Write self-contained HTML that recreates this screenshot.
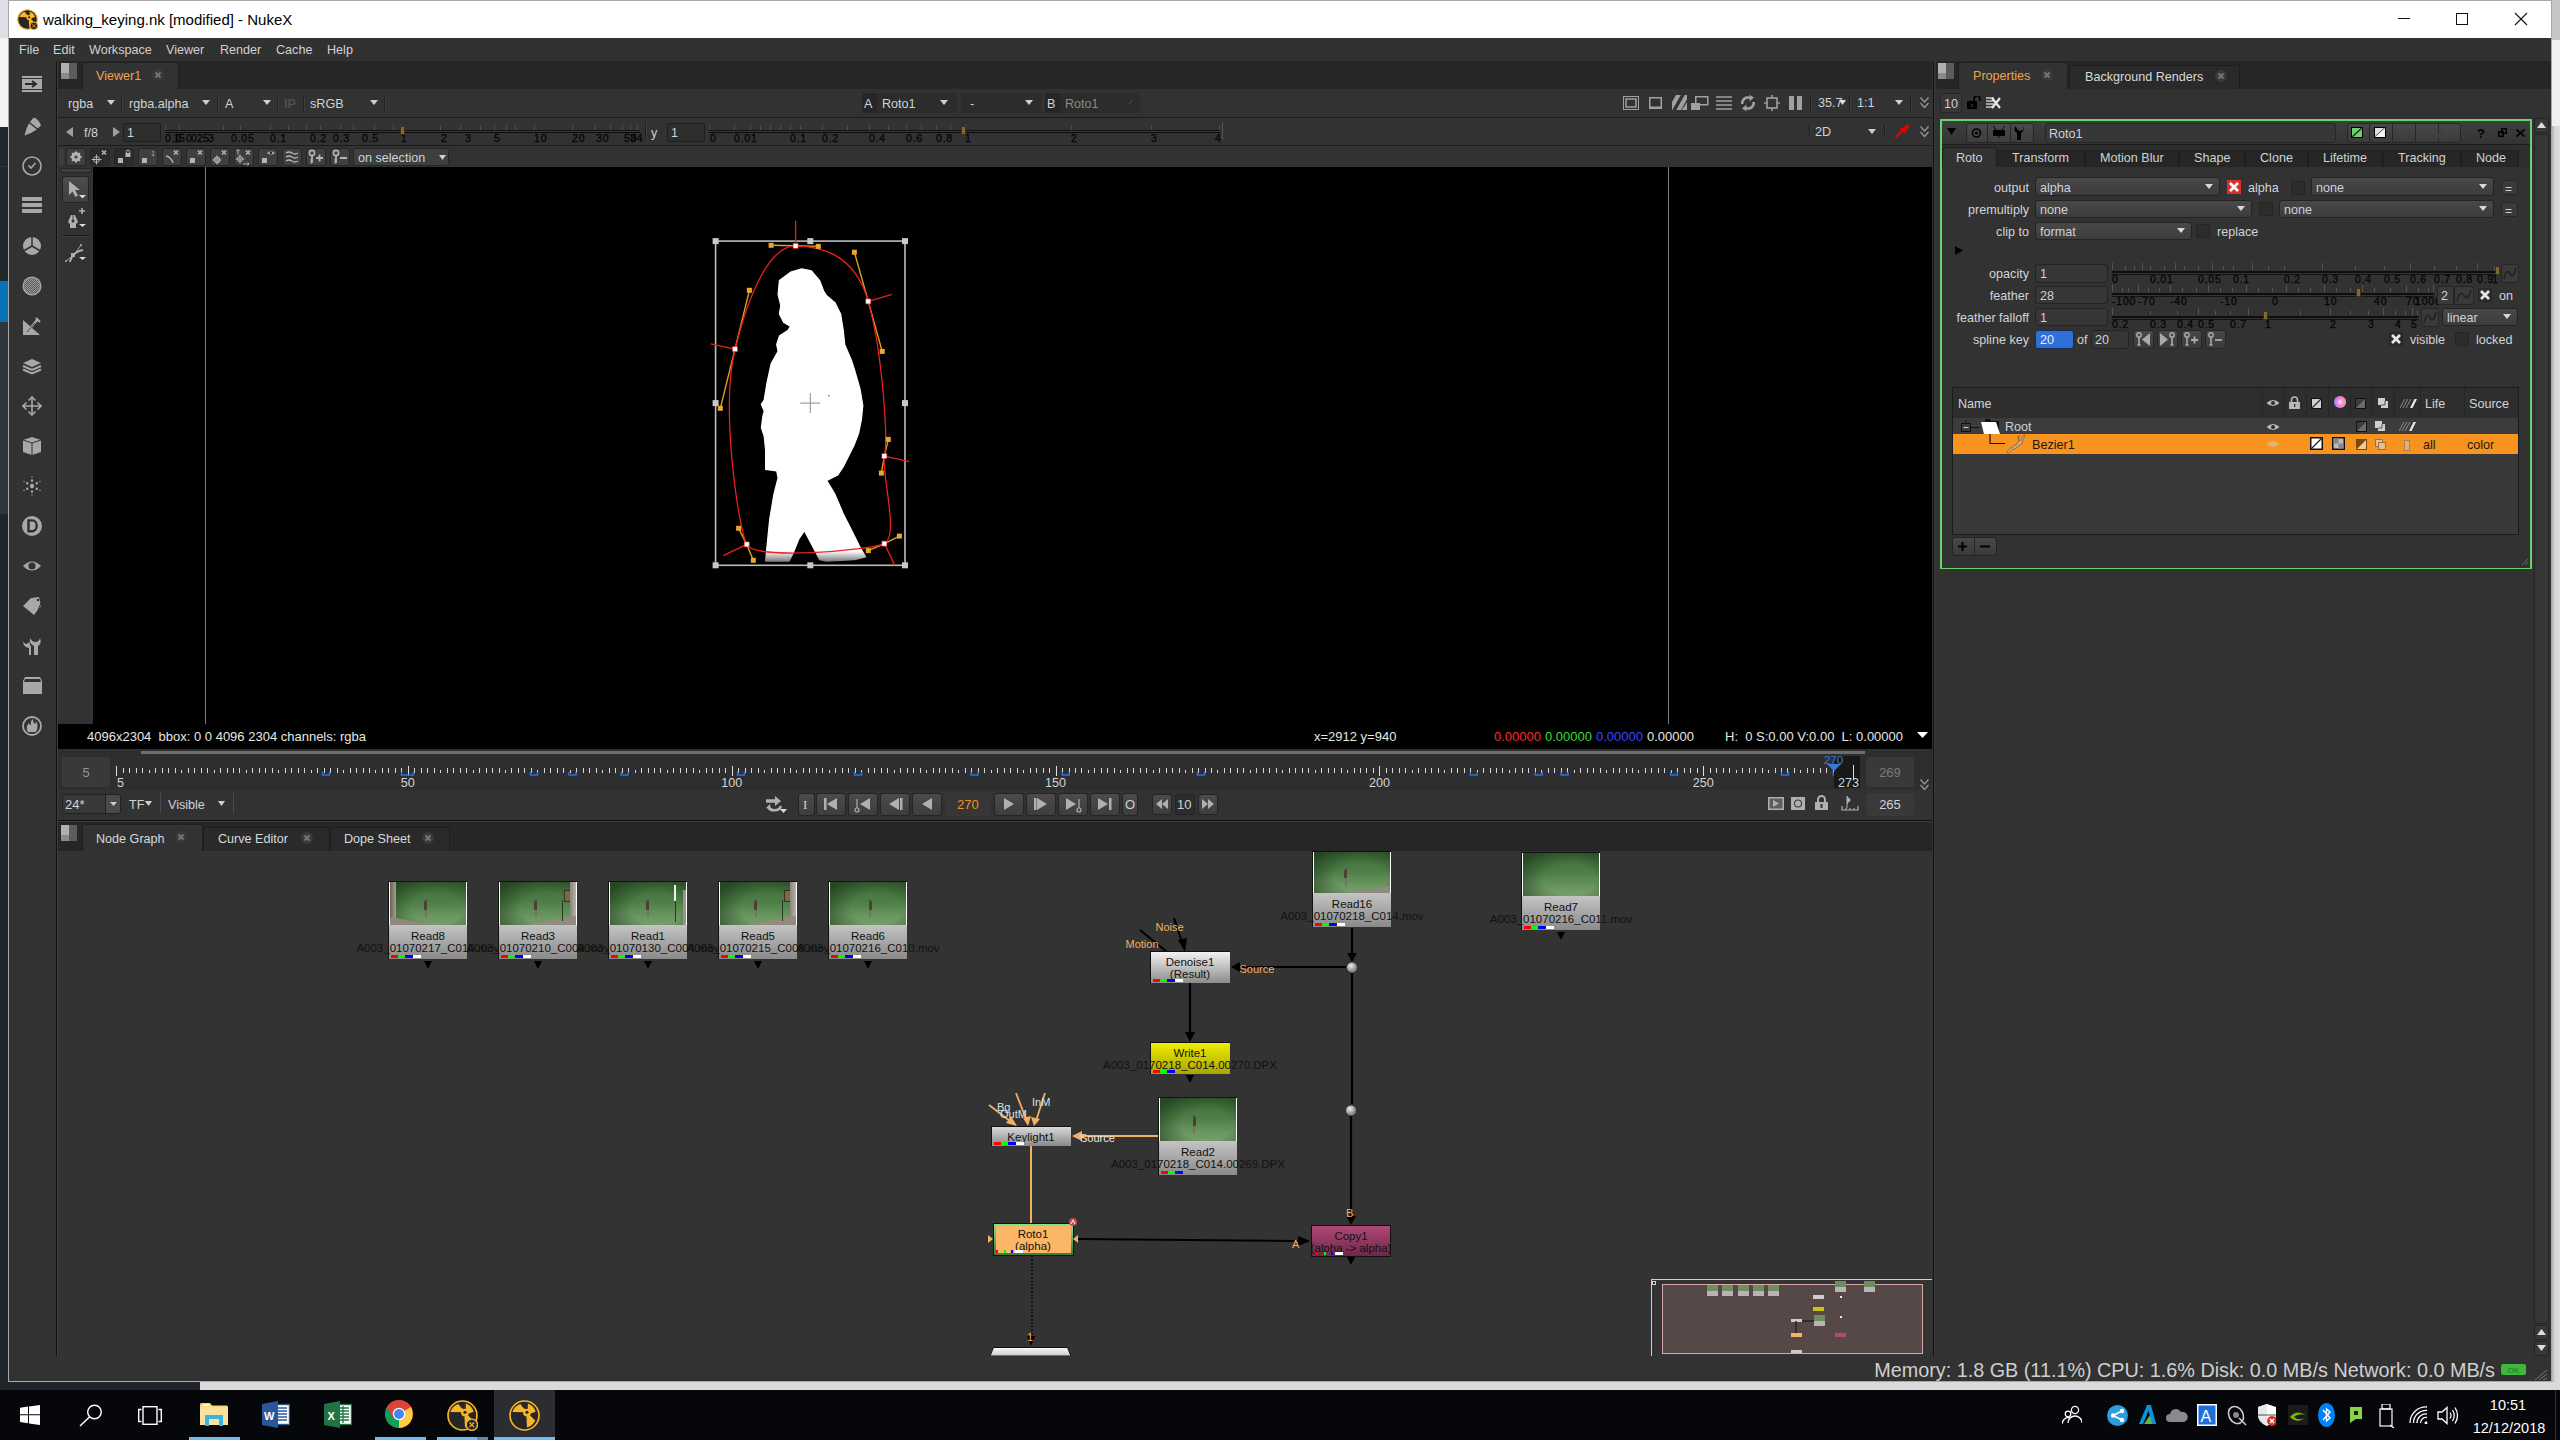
<!DOCTYPE html>
<html><head><meta charset="utf-8">
<style>
*{box-sizing:border-box;margin:0;padding:0}
html,body{width:2560px;height:1440px;overflow:hidden;background:#1d2127;font-family:"Liberation Sans",sans-serif;position:relative}
.a{position:absolute}
.t{position:absolute;white-space:nowrap;line-height:1;}
</style></head><body>
<div class="a" style="left:0px;top:0px;width:9px;height:38px;background:#dde1e6"></div>
<div class="a" style="left:0px;top:38px;width:9px;height:89px;background:#f3f3f3"></div>
<div class="a" style="left:0px;top:127px;width:9px;height:154px;background:#22272c"></div>
<div class="a" style="left:0px;top:166px;width:9px;height:1px;background:#30353a"></div>
<div class="a" style="left:0px;top:281px;width:9px;height:41px;background:#0a72b8"></div>
<div class="a" style="left:0px;top:322px;width:9px;height:192px;background:#30363c"></div>
<div class="a" style="left:0px;top:514px;width:9px;height:876px;background:#1f252a"></div>
<div class="a" style="left:2551px;top:0px;width:9px;height:40px;background:#c6c6c6"></div>
<div class="a" style="left:2551px;top:40px;width:9px;height:86px;background:#f0f0f0"></div>
<div class="a" style="left:2551px;top:126px;width:9px;height:1264px;background:linear-gradient(90deg,#a0a0a0,#d4d4d4 40%,#e0e0e0)"></div>
<div class="a" style="left:0px;top:1382px;width:200px;height:8px;background:#1f252a"></div>
<div class="a" style="left:200px;top:1382px;width:2360px;height:8px;background:#dadada"></div>
<div class="a" style="left:8px;top:0px;width:2544px;height:1382px;background:#323232;border:1px solid #a8a8a8"></div>
<div class="a" style="left:9px;top:1px;width:2542px;height:37px;background:#fff"></div>
<svg class="a" style="left:17px;top:9px;" width="21" height="21" viewBox="0 0 21 21"><g transform="scale(0.7)"><circle cx="15" cy="15" r="14" fill="#262626" stroke="#f7b52a" stroke-width="1.6"/><path d="M17.4 11.8L3.2 11.6A12.6 12.6 0 0 1 11 3.9Q13 7.5 15.2 8.4Z" fill="#f7b52a"/><path d="M17.4 11.8L18.2 8.4V3.5A12.6 12.6 0 0 1 25.8 11.3L21.7 12.8Z" fill="#f7b52a"/><path d="M19.5 14L25.4 19.9A12.6 12.6 0 0 1 17.4 26.6L16.9 16Z" fill="#f7b52a"/><circle cx="17.4" cy="12.2" r="3.8" fill="#f7b52a"/><circle cx="17.4" cy="11.9" r="1.5" fill="#262626"/><circle cx="24" cy="24" r="5.5" fill="#262626" stroke="#f7b52a" stroke-width="1.4"/><path d="M21.8 21.8L26.2 26.2M26.2 21.8L21.8 26.2" stroke="#f7b52a" stroke-width="1.2"/></g></svg>
<div class="t" style="left:43px;top:12.0px;font-size:15px;color:#000;">walking_keying.nk [modified] - NukeX</div>
<div class="a" style="left:2398px;top:18px;width:12px;height:1px;background:#111"></div>
<div class="a" style="left:2456px;top:13px;width:12px;height:12px;border:1px solid #111"></div>
<svg class="a" style="left:2514px;top:12px;" width="14" height="14" viewBox="0 0 14 14"><path d="M1 1L13 13M13 1L1 13" stroke="#111" stroke-width="1.1"/></svg>
<div class="a" style="left:9px;top:38px;width:2542px;height:23px;background:#313131"></div>
<div class="t" style="left:19px;top:44.0px;font-size:12.6px;color:#d0d0d0;">File</div>
<div class="t" style="left:53px;top:44.0px;font-size:12.6px;color:#d0d0d0;">Edit</div>
<div class="t" style="left:89px;top:44.0px;font-size:12.6px;color:#d0d0d0;">Workspace</div>
<div class="t" style="left:166px;top:44.0px;font-size:12.6px;color:#d0d0d0;">Viewer</div>
<div class="t" style="left:220px;top:44.0px;font-size:12.6px;color:#d0d0d0;">Render</div>
<div class="t" style="left:276px;top:44.0px;font-size:12.6px;color:#d0d0d0;">Cache</div>
<div class="t" style="left:327px;top:44.0px;font-size:12.6px;color:#d0d0d0;">Help</div>
<div class="a" style="left:9px;top:61px;width:47px;height:1295px;background:#323232"></div>
<div class="a" style="left:56px;top:61px;width:1px;height:1295px;background:#111"></div>
<div class="a" style="left:57px;top:61px;width:1px;height:1295px;background:#3e3e3e"></div>
<svg class="a" style="left:0px;top:0px;" width="0" height="0" viewBox="0 0 0 0"><defs><pattern id="dots" width="2" height="2" patternUnits="userSpaceOnUse"><rect width="1" height="1" fill="#9a9a9a"/><rect x="1" y="1" width="1" height="1" fill="#9a9a9a"/></pattern></defs></svg>
<svg class="a" style="left:22px;top:76px;" width="20" height="20" viewBox="0 0 20 20"><rect x="0" y="0" width="20" height="2" fill="#a8a8a8"/><rect x="0" y="3" width="20" height="10" fill="#a8a8a8"/><rect x="0" y="14" width="20" height="2" fill="#a8a8a8"/><path d="M3 8H14M10 5L14 8L10 11" stroke="#2a2a2a" stroke-width="2" fill="none"/></svg>
<svg class="a" style="left:22px;top:116px;" width="20" height="20" viewBox="0 0 20 20"><path d="M2.5 19.5L4.5 12.5Q7.5 5.5 12 1.5Q17 3.5 19 9.5Q14 14.5 9 17Z" fill="#a8a8a8"/><path d="M7 6.2L16.5 14" stroke="#323232" stroke-width="1.4"/></svg>
<svg class="a" style="left:22px;top:156px;" width="20" height="20" viewBox="0 0 20 20"><circle cx="10" cy="10" r="9" stroke="#a8a8a8" stroke-width="1.6" fill="none"/><path d="M6.5 9.5L9 12L13.5 7" stroke="#a8a8a8" stroke-width="1.6" fill="none"/></svg>
<svg class="a" style="left:22px;top:196px;" width="20" height="20" viewBox="0 0 20 20"><rect x="0" y="1" width="20" height="4" rx="1" fill="#a8a8a8"/><rect x="0" y="7" width="20" height="4" rx="1" fill="#a8a8a8"/><rect x="0" y="13" width="20" height="4" rx="1" fill="#a8a8a8"/></svg>
<svg class="a" style="left:22px;top:236px;" width="20" height="20" viewBox="0 0 20 20"><circle cx="10" cy="10" r="9" fill="#a8a8a8"/><path d="M10 10V0M10 10L1.5 15M10 10L18.5 15" stroke="#323232" stroke-width="1.5"/></svg>
<svg class="a" style="left:22px;top:276px;" width="20" height="20" viewBox="0 0 20 20"><circle cx="10" cy="10" r="9.5" fill="#a8a8a8"/><circle cx="10" cy="10" r="8" fill="#5a5a5a"/><circle cx="10" cy="10" r="8" fill="url(#dots)"/></svg>
<svg class="a" style="left:22px;top:316px;" width="20" height="20" viewBox="0 0 20 20"><path d="M1 4L1 19L18 19Z" fill="#a8a8a8"/><path d="M6 15L15 4M14 2L18 6" stroke="#a8a8a8" stroke-width="2.2"/><path d="M5 16L13 7" stroke="#323232" stroke-width="0.8"/></svg>
<svg class="a" style="left:22px;top:356px;" width="20" height="20" viewBox="0 0 20 20"><path d="M10 3L19 7L10 11L1 7Z" fill="#a8a8a8"/><path d="M1 10L10 14L19 10" stroke="#a8a8a8" stroke-width="2" fill="none"/><path d="M1 13.5L10 17.5L19 13.5" stroke="#a8a8a8" stroke-width="2" fill="none"/></svg>
<svg class="a" style="left:22px;top:396px;" width="20" height="20" viewBox="0 0 20 20"><path d="M10 1V19M1 10H19" stroke="#a8a8a8" stroke-width="1.6"/><path d="M6.5 4.5L10 1L13.5 4.5M6.5 15.5L10 19L13.5 15.5M4.5 6.5L1 10L4.5 13.5M15.5 6.5L19 10L15.5 13.5" stroke="#a8a8a8" stroke-width="1.6" fill="none"/></svg>
<svg class="a" style="left:22px;top:436px;" width="20" height="20" viewBox="0 0 20 20"><path d="M10 1L19 4V16L10 19L1 16V4Z" fill="#a8a8a8"/><path d="M1 4L10 7L19 4M10 7V19" stroke="#323232" stroke-width="1" fill="none"/></svg>
<svg class="a" style="left:22px;top:476px;" width="20" height="20" viewBox="0 0 20 20"><circle cx="10" cy="10" r="2.2" fill="#a8a8a8"/><g fill="#a8a8a8"><circle cx="10" cy="4.5" r="1.2"/><circle cx="10" cy="15.5" r="1.2"/><circle cx="5.2" cy="7.2" r="1.2"/><circle cx="14.8" cy="7.2" r="1.2"/><circle cx="5.2" cy="12.8" r="1.2"/><circle cx="14.8" cy="12.8" r="1.2"/><circle cx="10" cy="1" r=".7"/><circle cx="10" cy="19" r=".7"/><circle cx="2" cy="5.5" r=".7"/><circle cx="18" cy="5.5" r=".7"/><circle cx="2" cy="14.5" r=".7"/><circle cx="18" cy="14.5" r=".7"/></g></svg>
<svg class="a" style="left:22px;top:516px;" width="20" height="20" viewBox="0 0 20 20"><circle cx="10" cy="10" r="10" fill="#a8a8a8"/><path d="M5.3 3.2H10.3A5.6 6.6 0 0 1 10.3 16.4H5.3Z" fill="#2e2e2e"/><path d="M7.7 5.6H10.2A3.3 4.2 0 0 1 10.2 14H7.7Z" fill="#a8a8a8"/></svg>
<svg class="a" style="left:22px;top:556px;" width="20" height="20" viewBox="0 0 20 20"><path d="M1 10Q10 1 19 10Q10 19 1 10Z" fill="#a8a8a8"/><circle cx="10" cy="10" r="3.6" fill="#323232"/></svg>
<svg class="a" style="left:22px;top:596px;" width="20" height="20" viewBox="0 0 20 20"><path d="M1 10L9 2L17 1L19 10L12 19Z" fill="#a8a8a8"/><circle cx="16" cy="4" r="1.2" fill="#323232"/><path d="M19 7L14 19" stroke="#323232" stroke-width="1"/></svg>
<svg class="a" style="left:22px;top:636px;" width="20" height="20" viewBox="0 0 20 20"><path d="M7 19V12Q1 11 1 5Q2 8 5 8Q7 7 7 5Q8 9 9 11V19Z" fill="#a8a8a8"/><path d="M12 19V10Q7 8 8 2Q10 6 13.5 6Q17 6 18 2Q20 8 16 10V19Z" fill="#a8a8a8"/></svg>
<svg class="a" style="left:22px;top:676px;" width="20" height="20" viewBox="0 0 20 20"><path d="M3 1H18L20 5V18H1V5Z" fill="#a8a8a8"/><path d="M3 3H18L19 6H2Z" fill="#323232"/></svg>
<svg class="a" style="left:22px;top:716px;" width="20" height="20" viewBox="0 0 20 20"><circle cx="10" cy="10" r="9" stroke="#a8a8a8" stroke-width="1.8" fill="none"/><path d="M6 16Q3 11 7 7Q8 10 9 9Q8 5 11 3Q11 7 13 8Q14 6 14 5Q17 10 14 16Z" fill="#a8a8a8"/></svg>
<div class="a" style="left:0px;top:1390px;width:2560px;height:50px;background:#05070b"></div>
<div class="a" style="left:58px;top:61px;width:1875px;height:28px;background:#262626"></div>
<svg class="a" style="left:61px;top:63px;" width="16" height="16" viewBox="0 0 16 16"><rect x="0" y="0" width="8" height="10" fill="#b0b0b0"/><rect x="0" y="10" width="8" height="6" fill="#8a8a8a"/><rect x="8" y="0" width="8" height="16" fill="#5c5c5c"/></svg>
<div class="a" style="left:82px;top:62px;width:97px;height:27px;background:#323232;border-radius:3px 3px 0 0;border:1px solid #202020;border-bottom:none"></div>
<div class="t" style="left:96px;top:70.0px;font-size:12.6px;color:#f0a24a;">Viewer1</div>
<svg class="a" style="left:152px;top:69px;" width="12" height="12" viewBox="0 0 12 12"><circle cx="6" cy="6" r="6" fill="#3a3a3a"/><path d="M3.5 3.5L8.5 8.5M8.5 3.5L3.5 8.5" stroke="#777" stroke-width="1.8"/></svg>
<div class="a" style="left:58px;top:89px;width:1875px;height:28px;background:#323232"></div>
<div class="a" style="left:58px;top:117px;width:1875px;height:1px;background:#1c1c1c"></div>
<div class="t" style="left:68px;top:98.0px;font-size:12.6px;color:#cdd3d8;">rgba</div>
<svg class="a" style="left:106.5px;top:99.5px;" width="8" height="5" viewBox="0 0 8 5"><path d="M0 0H8L4.0 5Z" fill="#cfcfcf"/></svg>
<div class="a" style="left:121px;top:97px;width:1px;height:14px;background:#1f1f1f"></div>
<div class="a" style="left:122px;top:97px;width:1px;height:14px;background:#3d3d3d"></div>
<div class="t" style="left:129px;top:98.0px;font-size:12.6px;color:#cdd3d8;">rgba.alpha</div>
<svg class="a" style="left:202.0px;top:99.5px;" width="8" height="5" viewBox="0 0 8 5"><path d="M0 0H8L4.0 5Z" fill="#cfcfcf"/></svg>
<div class="a" style="left:217px;top:97px;width:1px;height:14px;background:#1f1f1f"></div>
<div class="a" style="left:218px;top:97px;width:1px;height:14px;background:#3d3d3d"></div>
<div class="t" style="left:225px;top:98.0px;font-size:12.6px;color:#cdd3d8;">A</div>
<svg class="a" style="left:262.5px;top:99.5px;" width="8" height="5" viewBox="0 0 8 5"><path d="M0 0H8L4.0 5Z" fill="#cfcfcf"/></svg>
<div class="a" style="left:277px;top:97px;width:1px;height:14px;background:#1f1f1f"></div>
<div class="a" style="left:278px;top:97px;width:1px;height:14px;background:#3d3d3d"></div>
<div class="t" style="left:284px;top:98.0px;font-size:12.6px;color:#4e4e4e;"><b>IP</b></div>
<div class="a" style="left:303px;top:97px;width:1px;height:14px;background:#1f1f1f"></div>
<div class="a" style="left:304px;top:97px;width:1px;height:14px;background:#3d3d3d"></div>
<div class="t" style="left:310px;top:98.0px;font-size:12.6px;color:#cdd3d8;">sRGB</div>
<svg class="a" style="left:369.5px;top:99.5px;" width="8" height="5" viewBox="0 0 8 5"><path d="M0 0H8L4.0 5Z" fill="#cfcfcf"/></svg>
<div class="a" style="left:384px;top:97px;width:1px;height:14px;background:#1f1f1f"></div>
<div class="a" style="left:385px;top:97px;width:1px;height:14px;background:#3d3d3d"></div>
<div class="a" style="left:862px;top:93px;width:15px;height:20px;background:#262626"></div>
<div class="a" style="left:877px;top:93px;width:80px;height:20px;background:#2c2c2c"></div>
<div class="t" style="left:864px;top:98.0px;font-size:12.6px;color:#cdd3d8;">A</div>
<div class="t" style="left:882px;top:98.0px;font-size:12.6px;color:#cdd3d8;">Roto1</div>
<svg class="a" style="left:940.0px;top:99.5px;" width="8" height="5" viewBox="0 0 8 5"><path d="M0 0H8L4.0 5Z" fill="#cfcfcf"/></svg>
<div class="a" style="left:961px;top:93px;width:80px;height:20px;background:#2c2c2c"></div>
<div class="t" style="left:970px;top:98.0px;font-size:12.6px;color:#cdd3d8;">-</div>
<svg class="a" style="left:1024.5px;top:99.5px;" width="8" height="5" viewBox="0 0 8 5"><path d="M0 0H8L4.0 5Z" fill="#cfcfcf"/></svg>
<div class="a" style="left:1045px;top:93px;width:15px;height:20px;background:#262626"></div>
<div class="a" style="left:1060px;top:93px;width:80px;height:20px;background:#2c2c2c"></div>
<div class="t" style="left:1047px;top:98.0px;font-size:12.6px;color:#cdd3d8;">B</div>
<div class="t" style="left:1065px;top:98.0px;font-size:12.6px;color:#8a8a8a;">Roto1</div>
<svg class="a" style="left:1125px;top:100px;" width="8" height="5" viewBox="0 0 8 5"><path d="M7 0L4 4" stroke="#555" stroke-width="1"/></svg>
<svg class="a" style="left:1623px;top:96px;" width="16" height="14" viewBox="0 0 16 14"><rect x="0.5" y="0.5" width="15" height="13" fill="none" stroke="#a0a0a0"/><rect x="3" y="3" width="10" height="8" fill="none" stroke="#a0a0a0" stroke-width="1.5"/></svg>
<svg class="a" style="left:1649px;top:97px;" width="13" height="12" viewBox="0 0 13 12"><rect x="0.75" y="0.75" width="11.5" height="10.5" fill="none" stroke="#a0a0a0" stroke-width="1.5"/><rect x="0" y="9.5" width="13" height="2" fill="#a0a0a0"/></svg>
<svg class="a" style="left:1672px;top:95px;" width="15" height="15" viewBox="0 0 15 15"><defs><clipPath id="sqc"><rect width="15" height="15"/></clipPath></defs><g clip-path="url(#sqc)"><path d="M-2 15L8 -3" stroke="#a0a0a0" stroke-width="4.2"/><path d="M5 18L15 0" stroke="#a0a0a0" stroke-width="4.2"/><path d="M11 17L17 8" stroke="#a0a0a0" stroke-width="4.2"/></g></svg>
<svg class="a" style="left:1691px;top:96px;" width="18" height="14" viewBox="0 0 18 14"><rect x="4.75" y="0.75" width="12" height="8" fill="none" stroke="#a0a0a0" stroke-width="1.5"/><rect x="0" y="7" width="9" height="7" fill="#a0a0a0"/></svg>
<svg class="a" style="left:1716px;top:96px;" width="16" height="14" viewBox="0 0 16 14"><path d="M0 1H16M0 5H16M0 9H16M0 13H16" stroke="#a0a0a0" stroke-width="1.6"/></svg>
<svg class="a" style="left:1739px;top:94px;" width="18" height="18" viewBox="0 0 18 18"><path d="M2 10A7 7 0 0 1 11 2.5L10 0.5L15 3.5L10.5 7.5L10.8 5.2A4.5 4.5 0 0 0 4.6 10Z" fill="#a0a0a0"/><path d="M16 8A7 7 0 0 1 7 15.5L8 17.5L3 14.5L7.5 10.5L7.2 12.8A4.5 4.5 0 0 0 13.4 8Z" fill="#a0a0a0"/></svg>
<svg class="a" style="left:1764px;top:95px;" width="16" height="16" viewBox="0 0 16 16"><rect x="3" y="3" width="10" height="10" fill="none" stroke="#a0a0a0" stroke-width="1.6"/><path d="M8 0V3M8 13V16M0 8H3M13 8H16" stroke="#a0a0a0" stroke-width="1.6"/></svg>
<svg class="a" style="left:1789px;top:96px;" width="14" height="14" viewBox="0 0 14 14"><rect x="0" y="0" width="5" height="14" fill="#a0a0a0"/><rect x="8" y="0" width="5" height="14" fill="#a0a0a0"/></svg>
<div class="a" style="left:1810px;top:96px;width:1px;height:15px;background:#1f1f1f"></div>
<div class="a" style="left:1811px;top:96px;width:1px;height:15px;background:#3d3d3d"></div>
<div class="t" style="left:1818px;top:97.0px;font-size:12.6px;color:#cdd3d8;">35.7</div>
<svg class="a" style="left:1838.5px;top:99.5px;" width="7" height="5" viewBox="0 0 7 5"><path d="M0 0H7L3.5 5Z" fill="#ddd"/></svg>
<div class="a" style="left:1849px;top:96px;width:1px;height:15px;background:#1f1f1f"></div>
<div class="a" style="left:1850px;top:96px;width:1px;height:15px;background:#3d3d3d"></div>
<div class="t" style="left:1857px;top:97.0px;font-size:12.6px;color:#cdd3d8;">1:1</div>
<svg class="a" style="left:1895.0px;top:99.5px;" width="8" height="5" viewBox="0 0 8 5"><path d="M0 0H8L4.0 5Z" fill="#cfcfcf"/></svg>
<div class="a" style="left:1910px;top:96px;width:1px;height:15px;background:#1f1f1f"></div>
<div class="a" style="left:1911px;top:96px;width:1px;height:15px;background:#3d3d3d"></div>
<svg class="a" style="left:1920px;top:97px;" width="9" height="12" viewBox="0 0 9 12"><path d="M0.5 0.5L4.5 5L8.5 0.5M0.5 6L4.5 10.5L8.5 6" stroke="#9a9a9a" stroke-width="1.2" fill="none"/></svg>
<div class="a" style="left:58px;top:118px;width:1875px;height:28px;background:#323232"></div>
<svg class="a" style="left:66px;top:127px;" width="7" height="10" viewBox="0 0 7 10"><path d="M7 0V10L0 5Z" fill="#a0a0a0"/></svg>
<div class="t" style="left:84px;top:127.0px;font-size:12.6px;color:#cdd3d8;">f/8</div>
<svg class="a" style="left:113px;top:127px;" width="7" height="10" viewBox="0 0 7 10"><path d="M0 0V10L7 5Z" fill="#a0a0a0"/></svg>
<div class="a" style="left:123px;top:123px;width:38px;height:19px;background:#2e2e2e;border:1px solid #1e1e1e;border-radius:2px"></div>
<div class="t" style="left:127px;top:127.0px;font-size:12.6px;color:#cdd3d8;">1</div>
<div class="a" style="left:165px;top:130px;width:475px;height:3px;background:#111;border-top:1px solid #111;border-bottom:1px solid #0c0c0c"></div>
<div class="a" style="left:165px;top:131px;width:475px;height:1px;background:#3a3a3a"></div>
<svg class="a" style="left:165px;top:122px;" width="476" height="8" viewBox="0 0 476 8"><rect x="0" y="3" width="1" height="5" fill="#505050"/><rect x="14" y="3" width="1" height="5" fill="#505050"/><rect x="58" y="3" width="1" height="5" fill="#505050"/><rect x="75" y="3" width="1" height="5" fill="#505050"/><rect x="105" y="3" width="1" height="5" fill="#505050"/><rect x="123" y="3" width="1" height="5" fill="#505050"/><rect x="141" y="3" width="1" height="5" fill="#505050"/><rect x="155" y="3" width="1" height="5" fill="#505050"/><rect x="175" y="3" width="1" height="5" fill="#505050"/><rect x="188" y="3" width="1" height="5" fill="#505050"/><rect x="209" y="3" width="1" height="5" fill="#505050"/><rect x="228" y="3" width="1" height="5" fill="#505050"/><rect x="236" y="3" width="1" height="5" fill="#505050"/><rect x="275" y="3" width="1" height="5" fill="#505050"/><rect x="295" y="3" width="1" height="5" fill="#505050"/><rect x="315" y="3" width="1" height="5" fill="#505050"/><rect x="329" y="3" width="1" height="5" fill="#505050"/><rect x="341" y="3" width="1" height="5" fill="#505050"/><rect x="350" y="3" width="1" height="5" fill="#505050"/><rect x="369" y="3" width="1" height="5" fill="#505050"/><rect x="407" y="3" width="1" height="5" fill="#505050"/><rect x="430" y="3" width="1" height="5" fill="#505050"/><rect x="445" y="3" width="1" height="5" fill="#505050"/><rect x="457" y="3" width="1" height="5" fill="#505050"/><rect x="465" y="3" width="1" height="5" fill="#505050"/><rect x="472" y="3" width="1" height="5" fill="#505050"/></svg>
<div class="t" style="left:165px;top:133.0px;font-size:10.5px;color:#050505;letter-spacing:0.8px;-webkit-text-stroke:0.3px #050505">0.0</div>
<div class="t" style="left:174px;top:133.0px;font-size:10.5px;color:#050505;letter-spacing:0.8px;-webkit-text-stroke:0.3px #050505">1</div>
<div class="t" style="left:179px;top:133.0px;font-size:10.5px;color:#050505;letter-spacing:0.8px;-webkit-text-stroke:0.3px #050505">5</div>
<div class="t" style="left:186px;top:133.0px;font-size:10.5px;color:#050505;letter-spacing:0.8px;-webkit-text-stroke:0.3px #050505">0</div>
<div class="t" style="left:191px;top:133.0px;font-size:10.5px;color:#050505;letter-spacing:0.8px;-webkit-text-stroke:0.3px #050505">0</div>
<div class="t" style="left:197px;top:133.0px;font-size:10.5px;color:#050505;letter-spacing:0.8px;-webkit-text-stroke:0.3px #050505">2</div>
<div class="t" style="left:203px;top:133.0px;font-size:10.5px;color:#050505;letter-spacing:0.8px;-webkit-text-stroke:0.3px #050505">5</div>
<div class="t" style="left:208px;top:133.0px;font-size:10.5px;color:#050505;letter-spacing:0.8px;-webkit-text-stroke:0.3px #050505">3</div>
<div class="t" style="left:231px;top:133.0px;font-size:10.5px;color:#050505;letter-spacing:0.8px;-webkit-text-stroke:0.3px #050505">0.05</div>
<div class="t" style="left:270px;top:133.0px;font-size:10.5px;color:#050505;letter-spacing:0.8px;-webkit-text-stroke:0.3px #050505">0.1</div>
<div class="t" style="left:310px;top:133.0px;font-size:10.5px;color:#050505;letter-spacing:0.8px;-webkit-text-stroke:0.3px #050505">0.2</div>
<div class="t" style="left:333px;top:133.0px;font-size:10.5px;color:#050505;letter-spacing:0.8px;-webkit-text-stroke:0.3px #050505">0.3</div>
<div class="t" style="left:362px;top:133.0px;font-size:10.5px;color:#050505;letter-spacing:0.8px;-webkit-text-stroke:0.3px #050505">0.5</div>
<div class="t" style="left:401px;top:133.0px;font-size:10.5px;color:#050505;letter-spacing:0.8px;-webkit-text-stroke:0.3px #050505">1</div>
<div class="t" style="left:441px;top:133.0px;font-size:10.5px;color:#050505;letter-spacing:0.8px;-webkit-text-stroke:0.3px #050505">2</div>
<div class="t" style="left:465px;top:133.0px;font-size:10.5px;color:#050505;letter-spacing:0.8px;-webkit-text-stroke:0.3px #050505">3</div>
<div class="t" style="left:494px;top:133.0px;font-size:10.5px;color:#050505;letter-spacing:0.8px;-webkit-text-stroke:0.3px #050505">5</div>
<div class="t" style="left:534px;top:133.0px;font-size:10.5px;color:#050505;letter-spacing:0.8px;-webkit-text-stroke:0.3px #050505">10</div>
<div class="t" style="left:572px;top:133.0px;font-size:10.5px;color:#050505;letter-spacing:0.8px;-webkit-text-stroke:0.3px #050505">20</div>
<div class="t" style="left:596px;top:133.0px;font-size:10.5px;color:#050505;letter-spacing:0.8px;-webkit-text-stroke:0.3px #050505">30</div>
<div class="t" style="left:624px;top:133.0px;font-size:10.5px;color:#050505;letter-spacing:0.8px;-webkit-text-stroke:0.3px #050505">50</div>
<div class="t" style="left:630px;top:133.0px;font-size:10.5px;color:#050505;letter-spacing:0.8px;-webkit-text-stroke:0.3px #050505">34</div>
<div class="a" style="left:400px;top:126px;width:5px;height:9px;background:#7d6a35;border:1px solid #3b3118"></div>
<div class="a" style="left:645px;top:122px;width:1px;height:19px;background:#1f1f1f"></div>
<div class="a" style="left:646px;top:122px;width:1px;height:19px;background:#3d3d3d"></div>
<div class="t" style="left:651px;top:127.0px;font-size:12.6px;color:#cdd3d8;">y</div>
<div class="a" style="left:667px;top:123px;width:38px;height:19px;background:#2e2e2e;border:1px solid #1e1e1e;border-radius:2px"></div>
<div class="t" style="left:671px;top:127.0px;font-size:12.6px;color:#cdd3d8;">1</div>
<div class="a" style="left:709px;top:130px;width:511px;height:3px;background:#111;border-top:1px solid #111;border-bottom:1px solid #0c0c0c"></div>
<div class="a" style="left:709px;top:131px;width:511px;height:1px;background:#3a3a3a"></div>
<svg class="a" style="left:709px;top:122px;" width="512" height="8" viewBox="0 0 512 8"><rect x="0" y="3" width="1" height="5" fill="#505050"/><rect x="25" y="3" width="1" height="5" fill="#505050"/><rect x="41" y="3" width="1" height="5" fill="#505050"/><rect x="51" y="3" width="1" height="5" fill="#505050"/><rect x="61" y="3" width="1" height="5" fill="#505050"/><rect x="71" y="3" width="1" height="5" fill="#505050"/><rect x="81" y="3" width="1" height="5" fill="#505050"/><rect x="91" y="3" width="1" height="5" fill="#505050"/><rect x="113" y="3" width="1" height="5" fill="#505050"/><rect x="138" y="3" width="1" height="5" fill="#505050"/><rect x="160" y="3" width="1" height="5" fill="#505050"/><rect x="179" y="3" width="1" height="5" fill="#505050"/><rect x="197" y="3" width="1" height="5" fill="#505050"/><rect x="212" y="3" width="1" height="5" fill="#505050"/><rect x="227" y="3" width="1" height="5" fill="#505050"/><rect x="241" y="3" width="1" height="5" fill="#505050"/><rect x="256" y="3" width="1" height="5" fill="#505050"/><rect x="362" y="3" width="1" height="5" fill="#505050"/><rect x="442" y="3" width="1" height="5" fill="#505050"/><rect x="510" y="3" width="1" height="5" fill="#505050"/></svg>
<div class="t" style="left:710px;top:133.0px;font-size:10.5px;color:#050505;letter-spacing:0.8px;-webkit-text-stroke:0.3px #050505">0</div>
<div class="t" style="left:734px;top:133.0px;font-size:10.5px;color:#050505;letter-spacing:0.8px;-webkit-text-stroke:0.3px #050505">0.01</div>
<div class="t" style="left:790px;top:133.0px;font-size:10.5px;color:#050505;letter-spacing:0.8px;-webkit-text-stroke:0.3px #050505">0.1</div>
<div class="t" style="left:822px;top:133.0px;font-size:10.5px;color:#050505;letter-spacing:0.8px;-webkit-text-stroke:0.3px #050505">0.2</div>
<div class="t" style="left:869px;top:133.0px;font-size:10.5px;color:#050505;letter-spacing:0.8px;-webkit-text-stroke:0.3px #050505">0.4</div>
<div class="t" style="left:906px;top:133.0px;font-size:10.5px;color:#050505;letter-spacing:0.8px;-webkit-text-stroke:0.3px #050505">0.6</div>
<div class="t" style="left:936px;top:133.0px;font-size:10.5px;color:#050505;letter-spacing:0.8px;-webkit-text-stroke:0.3px #050505">0.8</div>
<div class="t" style="left:965px;top:133.0px;font-size:10.5px;color:#050505;letter-spacing:0.8px;-webkit-text-stroke:0.3px #050505">1</div>
<div class="t" style="left:1071px;top:133.0px;font-size:10.5px;color:#050505;letter-spacing:0.8px;-webkit-text-stroke:0.3px #050505">2</div>
<div class="t" style="left:1151px;top:133.0px;font-size:10.5px;color:#050505;letter-spacing:0.8px;-webkit-text-stroke:0.3px #050505">3</div>
<div class="t" style="left:1215px;top:133.0px;font-size:10.5px;color:#050505;letter-spacing:0.8px;-webkit-text-stroke:0.3px #050505">4</div>
<div class="a" style="left:961px;top:126px;width:5px;height:9px;background:#7d6a35;border:1px solid #3b3118"></div>
<div class="a" style="left:1222px;top:122px;width:1px;height:18px;background:#555"></div>
<div class="a" style="left:1809px;top:124px;width:1px;height:14px;background:#1f1f1f"></div>
<div class="a" style="left:1810px;top:124px;width:1px;height:14px;background:#3d3d3d"></div>
<div class="t" style="left:1815px;top:126.0px;font-size:12.6px;color:#cdd3d8;">2D</div>
<svg class="a" style="left:1868.0px;top:128.5px;" width="8" height="5" viewBox="0 0 8 5"><path d="M0 0H8L4.0 5Z" fill="#cfcfcf"/></svg>
<div class="a" style="left:1884px;top:124px;width:1px;height:14px;background:#1f1f1f"></div>
<div class="a" style="left:1885px;top:124px;width:1px;height:14px;background:#3d3d3d"></div>
<svg class="a" style="left:1894px;top:124px;" width="16" height="15" viewBox="0 0 16 15"><path d="M1.5 13.5L9.5 5.5" stroke="#e80000" stroke-width="2.4"/><path d="M6.5 3.5L11.5 8.5" stroke="#e80000" stroke-width="2.2"/><path d="M9.5 5.5L13 1.5L14.5 3L10.5 6.5Z" fill="#e80000" stroke="#e80000" stroke-width="2"/></svg>
<svg class="a" style="left:1920px;top:126px;" width="9" height="12" viewBox="0 0 9 12"><path d="M0.5 0.5L4.5 5L8.5 0.5M0.5 6L4.5 10.5L8.5 6" stroke="#9a9a9a" stroke-width="1.2" fill="none"/></svg>
<div class="a" style="left:58px;top:145px;width:1875px;height:1px;background:#1c1c1c"></div>
<div class="a" style="left:58px;top:146px;width:1875px;height:21px;background:#323232"></div>
<div class="a" style="left:59px;top:148px;width:5px;height:18px;background:#3c3c3c;border-radius:2px"></div>
<div class="a" style="left:66px;top:148px;width:20px;height:18px;background:#3f3f3f;border:1px solid #262626;border-radius:3px"></div>
<div class="a" style="left:90px;top:148px;width:20px;height:18px;background:#2b2b2b;border:1px solid #262626;border-radius:3px"></div>
<div class="a" style="left:114px;top:148px;width:20px;height:18px;background:#2b2b2b;border:1px solid #262626;border-radius:3px"></div>
<div class="a" style="left:138px;top:148px;width:20px;height:18px;background:#3f3f3f;border:1px solid #262626;border-radius:3px"></div>
<div class="a" style="left:162px;top:148px;width:20px;height:18px;background:#3f3f3f;border:1px solid #262626;border-radius:3px"></div>
<div class="a" style="left:186px;top:148px;width:20px;height:18px;background:#3f3f3f;border:1px solid #262626;border-radius:3px"></div>
<div class="a" style="left:210px;top:148px;width:20px;height:18px;background:#3f3f3f;border:1px solid #262626;border-radius:3px"></div>
<div class="a" style="left:234px;top:148px;width:20px;height:18px;background:#3f3f3f;border:1px solid #262626;border-radius:3px"></div>
<div class="a" style="left:258px;top:148px;width:20px;height:18px;background:#3f3f3f;border:1px solid #262626;border-radius:3px"></div>
<div class="a" style="left:282px;top:148px;width:20px;height:18px;background:#3f3f3f;border:1px solid #262626;border-radius:3px"></div>
<div class="a" style="left:306px;top:148px;width:20px;height:18px;background:#3f3f3f;border:1px solid #262626;border-radius:3px"></div>
<div class="a" style="left:330px;top:148px;width:20px;height:18px;background:#3f3f3f;border:1px solid #262626;border-radius:3px"></div>
<svg class="a" style="left:66px;top:148px;" width="20" height="18" viewBox="0 0 20 18"><circle cx="10" cy="9" r="3.6" fill="none" stroke="#b4b4b4" stroke-width="2.2"/><path d="M10 3.5V14.5M4.5 9H15.5M6.1 5.1L13.9 12.9M13.9 5.1L6.1 12.9" stroke="#b4b4b4" stroke-width="2"/><circle cx="10" cy="9" r="1.6" fill="#3f3f3f"/></svg>
<svg class="a" style="left:90px;top:148px;" width="20" height="18" viewBox="0 0 20 18"><circle cx="6.5" cy="11.5" r="3" fill="none" stroke="#b4b4b4" stroke-width="1"/><path d="M6.5 6.5V16.5M1.5 11.5H11.5" stroke="#b4b4b4" stroke-width="1"/><path d="M12 2.5L16 6.5M16 2.5L12 6.5" stroke="#b4b4b4" stroke-width="1.6"/></svg>
<svg class="a" style="left:114px;top:148px;" width="20" height="18" viewBox="0 0 20 18"><rect x="4" y="10" width="5" height="5" fill="#b4b4b4"/><rect x="11.5" y="5" width="5" height="4" fill="#b4b4b4"/><path d="M12.3 5V3.8A1.7 1.7 0 0 1 15.7 3.8V5" stroke="#b4b4b4" fill="none"/></svg>
<svg class="a" style="left:138px;top:148px;" width="20" height="18" viewBox="0 0 20 18"><rect x="4" y="10" width="5" height="5" fill="#b4b4b4"/><text x="13" y="8" font-size="7" fill="#b4b4b4" font-family="Liberation Sans">1</text></svg>
<svg class="a" style="left:162px;top:148px;" width="20" height="18" viewBox="0 0 20 18"><path d="M4 8Q9 9 11 15" stroke="#b4b4b4" stroke-width="1.3" fill="none"/><path d="M12 2.5L16 6.5M16 2.5L12 6.5" stroke="#b4b4b4" stroke-width="1.6"/></svg>
<svg class="a" style="left:186px;top:148px;" width="20" height="18" viewBox="0 0 20 18"><rect x="4" y="10" width="5" height="5" fill="#b4b4b4"/><path d="M12 2.5L16 6.5M16 2.5L12 6.5" stroke="#b4b4b4" stroke-width="1.6"/></svg>
<svg class="a" style="left:210px;top:148px;" width="20" height="18" viewBox="0 0 20 18"><circle cx="7" cy="12" r="2.6" fill="none" stroke="#b4b4b4" stroke-width="1.3"/><path d="M7 7.5V16.5M2.5 12H11.5" stroke="#b4b4b4" stroke-width="1.1"/><path d="M12 2.5L16 6.5M16 2.5L12 6.5" stroke="#b4b4b4" stroke-width="1.6"/></svg>
<svg class="a" style="left:234px;top:148px;" width="20" height="18" viewBox="0 0 20 18"><circle cx="6" cy="11" r="2.6" fill="none" stroke="#b4b4b4" stroke-width="1"/><path d="M6 6.5V15.5M1.5 11H10.5" stroke="#b4b4b4" stroke-width="1"/><path d="M4 1.5V6.5M2.5 3L4 1.5L5.5 3M9 16H15M13.5 14.5L15 16L13.5 17.5" stroke="#b4b4b4" stroke-width="1" fill="none"/><path d="M12 2.5L16 6.5M16 2.5L12 6.5" stroke="#b4b4b4" stroke-width="1.6"/></svg>
<svg class="a" style="left:258px;top:148px;" width="20" height="18" viewBox="0 0 20 18"><rect x="4" y="10" width="5" height="5" fill="#b4b4b4"/><path d="M9 5Q13 1.5 17 5Q13 8 9 5Z" fill="#b4b4b4"/><circle cx="13" cy="4.8" r="1.3" fill="#222"/></svg>
<svg class="a" style="left:282px;top:148px;" width="20" height="18" viewBox="0 0 20 18"><path d="M4 5Q7 3 10 5T16 5M4 9Q7 7 10 9T16 9M4 13Q7 11 10 13T16 13" stroke="#b4b4b4" stroke-width="1.3" fill="none"/></svg>
<svg class="a" style="left:306px;top:148px;" width="20" height="18" viewBox="0 0 20 18"><circle cx="6" cy="5" r="2.6" fill="none" stroke="#b4b4b4" stroke-width="1.6"/><path d="M6 7.5V15M4.5 12H6M4.5 14.5H6M10 10H17M13.5 6.5V13.5" stroke="#b4b4b4" stroke-width="1.8"/></svg>
<svg class="a" style="left:330px;top:148px;" width="20" height="18" viewBox="0 0 20 18"><circle cx="6" cy="5" r="2.6" fill="none" stroke="#b4b4b4" stroke-width="1.6"/><path d="M6 7.5V15M4.5 12H6M4.5 14.5H6M10 10H17" stroke="#b4b4b4" stroke-width="1.8"/></svg>
<div class="a" style="left:353px;top:148px;width:96px;height:18px;background:#3f3f3f;border:1px solid #262626;border-radius:3px"></div>
<div class="t" style="left:358px;top:152.0px;font-size:12.6px;color:#cdd3d8;">on selection</div>
<svg class="a" style="left:439.0px;top:154.5px;" width="7" height="5" viewBox="0 0 7 5"><path d="M0 0H7L3.5 5Z" fill="#cfcfcf"/></svg>
<div class="a" style="left:58px;top:167px;width:35px;height:557px;background:#323232"></div>
<div class="a" style="left:60px;top:168px;width:32px;height:5px;background:#3e3e3e;border-radius:2px;border:1px solid #262626"></div>
<div class="a" style="left:62px;top:176px;width:27px;height:27px;background:linear-gradient(#4d4d4d,#3f3f3f);border:1px solid #242424;border-radius:3px"></div>
<svg class="a" style="left:62px;top:176px;" width="27" height="27" viewBox="0 0 27 27"><path d="M7 5V19L10.5 15.5L13.5 21L16 19.5L13 14H18Z" fill="#b0b0b0"/><path d="M17 19H24L20.5 22.5Z" fill="#ddd"/></svg>
<svg class="a" style="left:62px;top:207px;" width="27" height="24" viewBox="0 0 27 24"><path d="M9 8L6 15L8 17V21H14V17L16 15L13 8Z" fill="#b0b0b0"/><circle cx="11" cy="14" r="1.5" fill="#323232"/><path d="M11 8V14" stroke="#323232" stroke-width="0.8"/><path d="M20 1V7M17 4H23" stroke="#b0b0b0" stroke-width="1.6"/><path d="M17 17H24L20.5 20Z" fill="#ddd"/></svg>
<div class="a" style="left:62px;top:235px;width:28px;height:1px;background:#1c1c1c"></div>
<div class="a" style="left:62px;top:236px;width:28px;height:1px;background:#3e3e3e"></div>
<svg class="a" style="left:62px;top:240px;" width="27" height="24" viewBox="0 0 27 24"><path d="M4 21L12 15L19 5" stroke="#b0b0b0" stroke-width="0.9" fill="none"/><path d="M8 22Q10 12 21 10" stroke="#b0b0b0" stroke-width="2" fill="none"/><rect x="9" y="13" width="4" height="4" fill="#b0b0b0"/><circle cx="4" cy="21" r="1" fill="#b0b0b0"/><circle cx="19" cy="5" r="1" fill="#b0b0b0"/><path d="M17 17H24L20.5 20Z" fill="#ddd"/></svg>
<div class="a" style="left:93px;top:167px;width:1840px;height:557px;background:#000"></div>
<div class="a" style="left:205px;top:167px;width:1px;height:557px;background:#7a7a7a"></div>
<div class="a" style="left:1668px;top:167px;width:1px;height:557px;background:#7a7a7a"></div>
<svg class="a" style="left:0px;top:0px;" width="1000" height="620" viewBox="0 0 1000 620"><defs><filter id="fb" x="-20%" y="-20%" width="140%" height="140%"><feGaussianBlur stdDeviation="0.7"/></filter><linearGradient id="sg" gradientUnits="userSpaceOnUse" x1="0" y1="551" x2="0" y2="563"><stop offset="0" stop-color="#fff"/><stop offset="1" stop-color="#6a6a6a"/></linearGradient></defs><path d="M790.6 272.2 L801.7 268.9 L811.4 270.8 L819.7 280.6 L823.9 291.7 L826.7 295.8 L835.0 302.8 L840.6 313.9 L843.3 330.6 L844.7 344.4 L851.7 361.1 L854.4 369.4 L860.0 388.9 L862.8 405.6 L861.4 419.4 L858.6 433.3 L854.4 444.4 L848.9 455.6 L843.3 466.7 L837.8 475.0 L829.4 479.2 L826.7 480.6 L835.0 494.4 L843.3 513.9 L851.7 530.6 L860.0 547.2 L865.6 556.9 L854.4 559.7 L826.7 561.1 L819.7 559.7 L804.4 530.6 L798.9 538.9 L793.3 552.8 L789.2 561.1 L765.6 561.1 L766.9 547.2 L769.7 519.4 L773.9 494.4 L778.1 477.8 L776.7 470.8 L765.6 469.4 L765.6 450.0 L764.2 436.1 L761.4 427.8 L762.8 416.7 L764.2 411.1 L761.4 404.2 L764.2 400.0 L766.9 383.3 L771.1 363.9 L778.1 351.4 L776.7 344.4 L779.4 336.1 L787.8 330.6 L790.6 326.4 L783.6 322.2 L779.4 313.9 L780.8 305.6 L778.1 294.4 L779.4 280.6Z" fill="url(#sg)" stroke="url(#sg)" stroke-width="1.2" stroke-linejoin="round" filter="url(#fb)"/><rect x="715.6" y="241.1" width="189.4" height="324.2" fill="none" stroke="#bdbdbd" stroke-width="1.6"/><rect x="712.6" y="238.1" width="6" height="6" fill="#c8c8c8"/><rect x="807.3" y="238.1" width="6" height="6" fill="#c8c8c8"/><rect x="902.0" y="238.1" width="6" height="6" fill="#c8c8c8"/><rect x="712.6" y="400.1" width="6" height="6" fill="#c8c8c8"/><rect x="902.0" y="400.1" width="6" height="6" fill="#c8c8c8"/><rect x="712.6" y="562.3" width="6" height="6" fill="#c8c8c8"/><rect x="807.3" y="562.3" width="6" height="6" fill="#c8c8c8"/><rect x="902.0" y="562.3" width="6" height="6" fill="#c8c8c8"/><path d="M800.3 403.1H820.3M810.3 393.1V413.1" stroke="#8a8a8a" stroke-width="1"/><path d="M771.1 245.3L795.6 245.8L818.3 246.4" stroke="#e0a020" stroke-width="1.4" fill="none"/><path d="M854.4 252.2L868.3 301.4L882.2 351.4" stroke="#e0a020" stroke-width="1.4" fill="none"/><path d="M888.3 439.4L884.4 456.1L881.4 473.1" stroke="#e0a020" stroke-width="1.4" fill="none"/><path d="M899.4 536.1L884.4 543.6L868.3 550.6" stroke="#e0a020" stroke-width="1.4" fill="none"/><path d="M753.3 560.3L746.7 544.4L738.6 528.3" stroke="#e0a020" stroke-width="1.4" fill="none"/><path d="M720.3 408.3L735.0 349.2L749.4 290.3" stroke="#e0a020" stroke-width="1.4" fill="none"/><path d="M795.6 245.8 C818.3 246.4 854.4 252.2 868.3 301.4 C882.2 351.4 888.3 439.4 884.4 456.1 C881.4 473.1 899.4 536.1 884.4 543.6 C868.3 550.6 753.3 560.3 746.7 544.4 C738.6 528.3 720.3 408.3 735.0 349.2 C749.4 290.3 771.1 245.3 795.6 245.8" stroke="#f02020" stroke-width="1.25" fill="none"/><path d="M795.6 245.8L795.6 220.8" stroke="#e8201c" stroke-width="1.3"/><path d="M868.3 301.4L891.9 294.4" stroke="#e8201c" stroke-width="1.3"/><path d="M884.4 456.1L909.2 461.7" stroke="#e8201c" stroke-width="1.3"/><path d="M884.4 543.6L894.7 565.3" stroke="#e8201c" stroke-width="1.3"/><path d="M746.7 544.4L723.3 555.6" stroke="#e8201c" stroke-width="1.3"/><path d="M735.0 349.2L710.8 343.9" stroke="#e8201c" stroke-width="1.3"/><rect x="768.6" y="242.8" width="5" height="5" fill="#e8a830"/><rect x="815.8" y="243.9" width="5" height="5" fill="#e8a830"/><rect x="793.1" y="243.3" width="5" height="5" fill="#fff" stroke="#e8201c" stroke-width="0.6"/><rect x="851.9" y="249.7" width="5" height="5" fill="#e8a830"/><rect x="879.7" y="348.9" width="5" height="5" fill="#e8a830"/><rect x="865.8" y="298.9" width="5" height="5" fill="#fff" stroke="#e8201c" stroke-width="0.6"/><rect x="885.8" y="436.9" width="5" height="5" fill="#e8a830"/><rect x="878.9" y="470.6" width="5" height="5" fill="#e8a830"/><rect x="881.9" y="453.6" width="5" height="5" fill="#fff" stroke="#e8201c" stroke-width="0.6"/><rect x="896.9" y="533.6" width="5" height="5" fill="#e8a830"/><rect x="865.8" y="548.1" width="5" height="5" fill="#e8a830"/><rect x="881.9" y="541.1" width="5" height="5" fill="#fff" stroke="#e8201c" stroke-width="0.6"/><rect x="750.8" y="557.8" width="5" height="5" fill="#e8a830"/><rect x="736.1" y="525.8" width="5" height="5" fill="#e8a830"/><rect x="744.2" y="541.9" width="5" height="5" fill="#fff" stroke="#e8201c" stroke-width="0.6"/><rect x="717.8" y="405.8" width="5" height="5" fill="#e8a830"/><rect x="746.9" y="287.8" width="5" height="5" fill="#e8a830"/><rect x="732.5" y="346.7" width="5" height="5" fill="#fff" stroke="#e8201c" stroke-width="0.6"/><circle cx="828.9" cy="395.8" r="1" fill="#999"/></svg>
<div class="a" style="left:58px;top:724px;width:1875px;height:25px;background:#000"></div>
<div class="t" style="left:87px;top:730.0px;font-size:13px;color:#e6e6e6;">4096x2304&nbsp; bbox: 0 0 4096 2304 channels: rgba</div>
<div class="t" style="left:1314px;top:730.0px;font-size:13px;color:#e6e6e6;">x=2912 y=940</div>
<div class="t" style="left:1494px;top:730.0px;font-size:13px;color:#ff2a2a;">0.00000</div>
<div class="t" style="left:1545px;top:730.0px;font-size:13px;color:#33dd33;">0.00000</div>
<div class="t" style="left:1596px;top:730.0px;font-size:13px;color:#3846ff;">0.00000</div>
<div class="t" style="left:1647px;top:730.0px;font-size:13px;color:#e6e6e6;">0.00000</div>
<div class="t" style="left:1725px;top:730.0px;font-size:13px;color:#e6e6e6;">H:&nbsp;&nbsp;0 S:0.00 V:0.00&nbsp; L: 0.00000</div>
<svg class="a" style="left:1917px;top:732px;" width="11" height="6" viewBox="0 0 11 6"><path d="M0 0H11L5.5 6Z" fill="#fff"/></svg>
<div class="a" style="left:58px;top:749px;width:1875px;height:41px;background:#2e2e2e"></div>
<div class="a" style="left:141px;top:751px;width:1724px;height:3px;background:#6e6e6e"></div>
<div class="a" style="left:62px;top:757px;width:48px;height:30px;background:#393939;border-radius:3px"></div>
<div class="t" style="left:66.0px;width:40px;text-align:center;top:766.0px;font-size:13px;color:#8c9aa3;">5</div>
<svg class="a" style="left:0px;top:766px;" width="1860" height="11" viewBox="0 0 1860 11"><rect x="116" y="0" width="1" height="10" fill="#e0e0e0"/><rect x="123" y="2" width="1" height="5" fill="#d8d8d8"/><rect x="129" y="2" width="1" height="5" fill="#d8d8d8"/><rect x="136" y="2" width="1" height="5" fill="#d8d8d8"/><rect x="142" y="2" width="1" height="5" fill="#d8d8d8"/><rect x="149" y="4" width="1" height="3" fill="#d8d8d8"/><rect x="155" y="2" width="1" height="5" fill="#d8d8d8"/><rect x="162" y="2" width="1" height="5" fill="#d8d8d8"/><rect x="168" y="2" width="1" height="5" fill="#d8d8d8"/><rect x="175" y="2" width="1" height="5" fill="#d8d8d8"/><rect x="181" y="4" width="1" height="3" fill="#d8d8d8"/><rect x="188" y="2" width="1" height="5" fill="#d8d8d8"/><rect x="194" y="2" width="1" height="5" fill="#d8d8d8"/><rect x="201" y="2" width="1" height="5" fill="#d8d8d8"/><rect x="207" y="2" width="1" height="5" fill="#d8d8d8"/><rect x="214" y="4" width="1" height="3" fill="#d8d8d8"/><rect x="220" y="2" width="1" height="5" fill="#d8d8d8"/><rect x="227" y="2" width="1" height="5" fill="#d8d8d8"/><rect x="233" y="2" width="1" height="5" fill="#d8d8d8"/><rect x="239" y="2" width="1" height="5" fill="#d8d8d8"/><rect x="246" y="4" width="1" height="3" fill="#d8d8d8"/><rect x="252" y="2" width="1" height="5" fill="#d8d8d8"/><rect x="259" y="2" width="1" height="5" fill="#d8d8d8"/><rect x="265" y="2" width="1" height="5" fill="#d8d8d8"/><rect x="272" y="2" width="1" height="5" fill="#d8d8d8"/><rect x="278" y="4" width="1" height="3" fill="#d8d8d8"/><rect x="285" y="2" width="1" height="5" fill="#d8d8d8"/><rect x="291" y="2" width="1" height="5" fill="#d8d8d8"/><rect x="298" y="2" width="1" height="5" fill="#d8d8d8"/><rect x="304" y="2" width="1" height="5" fill="#d8d8d8"/><rect x="311" y="4" width="1" height="3" fill="#d8d8d8"/><rect x="317" y="2" width="1" height="5" fill="#d8d8d8"/><rect x="324" y="2" width="1" height="5" fill="#d8d8d8"/><rect x="330" y="2" width="1" height="5" fill="#d8d8d8"/><rect x="337" y="2" width="1" height="5" fill="#d8d8d8"/><rect x="343" y="4" width="1" height="3" fill="#d8d8d8"/><rect x="350" y="2" width="1" height="5" fill="#d8d8d8"/><rect x="356" y="2" width="1" height="5" fill="#d8d8d8"/><rect x="363" y="2" width="1" height="5" fill="#d8d8d8"/><rect x="369" y="2" width="1" height="5" fill="#d8d8d8"/><rect x="375" y="4" width="1" height="3" fill="#d8d8d8"/><rect x="382" y="2" width="1" height="5" fill="#d8d8d8"/><rect x="388" y="2" width="1" height="5" fill="#d8d8d8"/><rect x="395" y="2" width="1" height="5" fill="#d8d8d8"/><rect x="401" y="2" width="1" height="5" fill="#d8d8d8"/><rect x="408" y="0" width="1" height="10" fill="#e0e0e0"/><rect x="414" y="2" width="1" height="5" fill="#d8d8d8"/><rect x="421" y="2" width="1" height="5" fill="#d8d8d8"/><rect x="427" y="2" width="1" height="5" fill="#d8d8d8"/><rect x="434" y="2" width="1" height="5" fill="#d8d8d8"/><rect x="440" y="4" width="1" height="3" fill="#d8d8d8"/><rect x="447" y="2" width="1" height="5" fill="#d8d8d8"/><rect x="453" y="2" width="1" height="5" fill="#d8d8d8"/><rect x="460" y="2" width="1" height="5" fill="#d8d8d8"/><rect x="466" y="2" width="1" height="5" fill="#d8d8d8"/><rect x="473" y="4" width="1" height="3" fill="#d8d8d8"/><rect x="479" y="2" width="1" height="5" fill="#d8d8d8"/><rect x="486" y="2" width="1" height="5" fill="#d8d8d8"/><rect x="492" y="2" width="1" height="5" fill="#d8d8d8"/><rect x="499" y="2" width="1" height="5" fill="#d8d8d8"/><rect x="505" y="4" width="1" height="3" fill="#d8d8d8"/><rect x="511" y="2" width="1" height="5" fill="#d8d8d8"/><rect x="518" y="2" width="1" height="5" fill="#d8d8d8"/><rect x="524" y="2" width="1" height="5" fill="#d8d8d8"/><rect x="531" y="2" width="1" height="5" fill="#d8d8d8"/><rect x="537" y="4" width="1" height="3" fill="#d8d8d8"/><rect x="544" y="2" width="1" height="5" fill="#d8d8d8"/><rect x="550" y="2" width="1" height="5" fill="#d8d8d8"/><rect x="557" y="2" width="1" height="5" fill="#d8d8d8"/><rect x="563" y="2" width="1" height="5" fill="#d8d8d8"/><rect x="570" y="4" width="1" height="3" fill="#d8d8d8"/><rect x="576" y="2" width="1" height="5" fill="#d8d8d8"/><rect x="583" y="2" width="1" height="5" fill="#d8d8d8"/><rect x="589" y="2" width="1" height="5" fill="#d8d8d8"/><rect x="596" y="2" width="1" height="5" fill="#d8d8d8"/><rect x="602" y="4" width="1" height="3" fill="#d8d8d8"/><rect x="609" y="2" width="1" height="5" fill="#d8d8d8"/><rect x="615" y="2" width="1" height="5" fill="#d8d8d8"/><rect x="622" y="2" width="1" height="5" fill="#d8d8d8"/><rect x="628" y="2" width="1" height="5" fill="#d8d8d8"/><rect x="635" y="4" width="1" height="3" fill="#d8d8d8"/><rect x="641" y="2" width="1" height="5" fill="#d8d8d8"/><rect x="648" y="2" width="1" height="5" fill="#d8d8d8"/><rect x="654" y="2" width="1" height="5" fill="#d8d8d8"/><rect x="660" y="2" width="1" height="5" fill="#d8d8d8"/><rect x="667" y="4" width="1" height="3" fill="#d8d8d8"/><rect x="673" y="2" width="1" height="5" fill="#d8d8d8"/><rect x="680" y="2" width="1" height="5" fill="#d8d8d8"/><rect x="686" y="2" width="1" height="5" fill="#d8d8d8"/><rect x="693" y="2" width="1" height="5" fill="#d8d8d8"/><rect x="699" y="4" width="1" height="3" fill="#d8d8d8"/><rect x="706" y="2" width="1" height="5" fill="#d8d8d8"/><rect x="712" y="2" width="1" height="5" fill="#d8d8d8"/><rect x="719" y="2" width="1" height="5" fill="#d8d8d8"/><rect x="725" y="2" width="1" height="5" fill="#d8d8d8"/><rect x="732" y="0" width="1" height="10" fill="#e0e0e0"/><rect x="738" y="2" width="1" height="5" fill="#d8d8d8"/><rect x="745" y="2" width="1" height="5" fill="#d8d8d8"/><rect x="751" y="2" width="1" height="5" fill="#d8d8d8"/><rect x="758" y="2" width="1" height="5" fill="#d8d8d8"/><rect x="764" y="4" width="1" height="3" fill="#d8d8d8"/><rect x="771" y="2" width="1" height="5" fill="#d8d8d8"/><rect x="777" y="2" width="1" height="5" fill="#d8d8d8"/><rect x="784" y="2" width="1" height="5" fill="#d8d8d8"/><rect x="790" y="2" width="1" height="5" fill="#d8d8d8"/><rect x="796" y="4" width="1" height="3" fill="#d8d8d8"/><rect x="803" y="2" width="1" height="5" fill="#d8d8d8"/><rect x="809" y="2" width="1" height="5" fill="#d8d8d8"/><rect x="816" y="2" width="1" height="5" fill="#d8d8d8"/><rect x="822" y="2" width="1" height="5" fill="#d8d8d8"/><rect x="829" y="4" width="1" height="3" fill="#d8d8d8"/><rect x="835" y="2" width="1" height="5" fill="#d8d8d8"/><rect x="842" y="2" width="1" height="5" fill="#d8d8d8"/><rect x="848" y="2" width="1" height="5" fill="#d8d8d8"/><rect x="855" y="2" width="1" height="5" fill="#d8d8d8"/><rect x="861" y="4" width="1" height="3" fill="#d8d8d8"/><rect x="868" y="2" width="1" height="5" fill="#d8d8d8"/><rect x="874" y="2" width="1" height="5" fill="#d8d8d8"/><rect x="881" y="2" width="1" height="5" fill="#d8d8d8"/><rect x="887" y="2" width="1" height="5" fill="#d8d8d8"/><rect x="894" y="4" width="1" height="3" fill="#d8d8d8"/><rect x="900" y="2" width="1" height="5" fill="#d8d8d8"/><rect x="907" y="2" width="1" height="5" fill="#d8d8d8"/><rect x="913" y="2" width="1" height="5" fill="#d8d8d8"/><rect x="920" y="2" width="1" height="5" fill="#d8d8d8"/><rect x="926" y="4" width="1" height="3" fill="#d8d8d8"/><rect x="933" y="2" width="1" height="5" fill="#d8d8d8"/><rect x="939" y="2" width="1" height="5" fill="#d8d8d8"/><rect x="945" y="2" width="1" height="5" fill="#d8d8d8"/><rect x="952" y="2" width="1" height="5" fill="#d8d8d8"/><rect x="958" y="4" width="1" height="3" fill="#d8d8d8"/><rect x="965" y="2" width="1" height="5" fill="#d8d8d8"/><rect x="971" y="2" width="1" height="5" fill="#d8d8d8"/><rect x="978" y="2" width="1" height="5" fill="#d8d8d8"/><rect x="984" y="2" width="1" height="5" fill="#d8d8d8"/><rect x="991" y="4" width="1" height="3" fill="#d8d8d8"/><rect x="997" y="2" width="1" height="5" fill="#d8d8d8"/><rect x="1004" y="2" width="1" height="5" fill="#d8d8d8"/><rect x="1010" y="2" width="1" height="5" fill="#d8d8d8"/><rect x="1017" y="2" width="1" height="5" fill="#d8d8d8"/><rect x="1023" y="4" width="1" height="3" fill="#d8d8d8"/><rect x="1030" y="2" width="1" height="5" fill="#d8d8d8"/><rect x="1036" y="2" width="1" height="5" fill="#d8d8d8"/><rect x="1043" y="2" width="1" height="5" fill="#d8d8d8"/><rect x="1049" y="2" width="1" height="5" fill="#d8d8d8"/><rect x="1056" y="0" width="1" height="10" fill="#e0e0e0"/><rect x="1062" y="2" width="1" height="5" fill="#d8d8d8"/><rect x="1069" y="2" width="1" height="5" fill="#d8d8d8"/><rect x="1075" y="2" width="1" height="5" fill="#d8d8d8"/><rect x="1081" y="2" width="1" height="5" fill="#d8d8d8"/><rect x="1088" y="4" width="1" height="3" fill="#d8d8d8"/><rect x="1094" y="2" width="1" height="5" fill="#d8d8d8"/><rect x="1101" y="2" width="1" height="5" fill="#d8d8d8"/><rect x="1107" y="2" width="1" height="5" fill="#d8d8d8"/><rect x="1114" y="2" width="1" height="5" fill="#d8d8d8"/><rect x="1120" y="4" width="1" height="3" fill="#d8d8d8"/><rect x="1127" y="2" width="1" height="5" fill="#d8d8d8"/><rect x="1133" y="2" width="1" height="5" fill="#d8d8d8"/><rect x="1140" y="2" width="1" height="5" fill="#d8d8d8"/><rect x="1146" y="2" width="1" height="5" fill="#d8d8d8"/><rect x="1153" y="4" width="1" height="3" fill="#d8d8d8"/><rect x="1159" y="2" width="1" height="5" fill="#d8d8d8"/><rect x="1166" y="2" width="1" height="5" fill="#d8d8d8"/><rect x="1172" y="2" width="1" height="5" fill="#d8d8d8"/><rect x="1179" y="2" width="1" height="5" fill="#d8d8d8"/><rect x="1185" y="4" width="1" height="3" fill="#d8d8d8"/><rect x="1192" y="2" width="1" height="5" fill="#d8d8d8"/><rect x="1198" y="2" width="1" height="5" fill="#d8d8d8"/><rect x="1205" y="2" width="1" height="5" fill="#d8d8d8"/><rect x="1211" y="2" width="1" height="5" fill="#d8d8d8"/><rect x="1217" y="4" width="1" height="3" fill="#d8d8d8"/><rect x="1224" y="2" width="1" height="5" fill="#d8d8d8"/><rect x="1230" y="2" width="1" height="5" fill="#d8d8d8"/><rect x="1237" y="2" width="1" height="5" fill="#d8d8d8"/><rect x="1243" y="2" width="1" height="5" fill="#d8d8d8"/><rect x="1250" y="4" width="1" height="3" fill="#d8d8d8"/><rect x="1256" y="2" width="1" height="5" fill="#d8d8d8"/><rect x="1263" y="2" width="1" height="5" fill="#d8d8d8"/><rect x="1269" y="2" width="1" height="5" fill="#d8d8d8"/><rect x="1276" y="2" width="1" height="5" fill="#d8d8d8"/><rect x="1282" y="4" width="1" height="3" fill="#d8d8d8"/><rect x="1289" y="2" width="1" height="5" fill="#d8d8d8"/><rect x="1295" y="2" width="1" height="5" fill="#d8d8d8"/><rect x="1302" y="2" width="1" height="5" fill="#d8d8d8"/><rect x="1308" y="2" width="1" height="5" fill="#d8d8d8"/><rect x="1315" y="4" width="1" height="3" fill="#d8d8d8"/><rect x="1321" y="2" width="1" height="5" fill="#d8d8d8"/><rect x="1328" y="2" width="1" height="5" fill="#d8d8d8"/><rect x="1334" y="2" width="1" height="5" fill="#d8d8d8"/><rect x="1341" y="2" width="1" height="5" fill="#d8d8d8"/><rect x="1347" y="4" width="1" height="3" fill="#d8d8d8"/><rect x="1354" y="2" width="1" height="5" fill="#d8d8d8"/><rect x="1360" y="2" width="1" height="5" fill="#d8d8d8"/><rect x="1366" y="2" width="1" height="5" fill="#d8d8d8"/><rect x="1373" y="2" width="1" height="5" fill="#d8d8d8"/><rect x="1379" y="0" width="1" height="10" fill="#e0e0e0"/><rect x="1386" y="2" width="1" height="5" fill="#d8d8d8"/><rect x="1392" y="2" width="1" height="5" fill="#d8d8d8"/><rect x="1399" y="2" width="1" height="5" fill="#d8d8d8"/><rect x="1405" y="2" width="1" height="5" fill="#d8d8d8"/><rect x="1412" y="4" width="1" height="3" fill="#d8d8d8"/><rect x="1418" y="2" width="1" height="5" fill="#d8d8d8"/><rect x="1425" y="2" width="1" height="5" fill="#d8d8d8"/><rect x="1431" y="2" width="1" height="5" fill="#d8d8d8"/><rect x="1438" y="2" width="1" height="5" fill="#d8d8d8"/><rect x="1444" y="4" width="1" height="3" fill="#d8d8d8"/><rect x="1451" y="2" width="1" height="5" fill="#d8d8d8"/><rect x="1457" y="2" width="1" height="5" fill="#d8d8d8"/><rect x="1464" y="2" width="1" height="5" fill="#d8d8d8"/><rect x="1470" y="2" width="1" height="5" fill="#d8d8d8"/><rect x="1477" y="4" width="1" height="3" fill="#d8d8d8"/><rect x="1483" y="2" width="1" height="5" fill="#d8d8d8"/><rect x="1490" y="2" width="1" height="5" fill="#d8d8d8"/><rect x="1496" y="2" width="1" height="5" fill="#d8d8d8"/><rect x="1502" y="2" width="1" height="5" fill="#d8d8d8"/><rect x="1509" y="4" width="1" height="3" fill="#d8d8d8"/><rect x="1515" y="2" width="1" height="5" fill="#d8d8d8"/><rect x="1522" y="2" width="1" height="5" fill="#d8d8d8"/><rect x="1528" y="2" width="1" height="5" fill="#d8d8d8"/><rect x="1535" y="2" width="1" height="5" fill="#d8d8d8"/><rect x="1541" y="4" width="1" height="3" fill="#d8d8d8"/><rect x="1548" y="2" width="1" height="5" fill="#d8d8d8"/><rect x="1554" y="2" width="1" height="5" fill="#d8d8d8"/><rect x="1561" y="2" width="1" height="5" fill="#d8d8d8"/><rect x="1567" y="2" width="1" height="5" fill="#d8d8d8"/><rect x="1574" y="4" width="1" height="3" fill="#d8d8d8"/><rect x="1580" y="2" width="1" height="5" fill="#d8d8d8"/><rect x="1587" y="2" width="1" height="5" fill="#d8d8d8"/><rect x="1593" y="2" width="1" height="5" fill="#d8d8d8"/><rect x="1600" y="2" width="1" height="5" fill="#d8d8d8"/><rect x="1606" y="4" width="1" height="3" fill="#d8d8d8"/><rect x="1613" y="2" width="1" height="5" fill="#d8d8d8"/><rect x="1619" y="2" width="1" height="5" fill="#d8d8d8"/><rect x="1626" y="2" width="1" height="5" fill="#d8d8d8"/><rect x="1632" y="2" width="1" height="5" fill="#d8d8d8"/><rect x="1638" y="4" width="1" height="3" fill="#d8d8d8"/><rect x="1645" y="2" width="1" height="5" fill="#d8d8d8"/><rect x="1651" y="2" width="1" height="5" fill="#d8d8d8"/><rect x="1658" y="2" width="1" height="5" fill="#d8d8d8"/><rect x="1664" y="2" width="1" height="5" fill="#d8d8d8"/><rect x="1671" y="4" width="1" height="3" fill="#d8d8d8"/><rect x="1677" y="2" width="1" height="5" fill="#d8d8d8"/><rect x="1684" y="2" width="1" height="5" fill="#d8d8d8"/><rect x="1690" y="2" width="1" height="5" fill="#d8d8d8"/><rect x="1697" y="2" width="1" height="5" fill="#d8d8d8"/><rect x="1703" y="0" width="1" height="10" fill="#e0e0e0"/><rect x="1710" y="2" width="1" height="5" fill="#d8d8d8"/><rect x="1716" y="2" width="1" height="5" fill="#d8d8d8"/><rect x="1723" y="2" width="1" height="5" fill="#d8d8d8"/><rect x="1729" y="2" width="1" height="5" fill="#d8d8d8"/><rect x="1736" y="4" width="1" height="3" fill="#d8d8d8"/><rect x="1742" y="2" width="1" height="5" fill="#d8d8d8"/><rect x="1749" y="2" width="1" height="5" fill="#d8d8d8"/><rect x="1755" y="2" width="1" height="5" fill="#d8d8d8"/><rect x="1762" y="2" width="1" height="5" fill="#d8d8d8"/><rect x="1768" y="4" width="1" height="3" fill="#d8d8d8"/><rect x="1775" y="2" width="1" height="5" fill="#d8d8d8"/><rect x="1781" y="2" width="1" height="5" fill="#d8d8d8"/><rect x="1787" y="2" width="1" height="5" fill="#d8d8d8"/><rect x="1794" y="2" width="1" height="5" fill="#d8d8d8"/><rect x="1800" y="4" width="1" height="3" fill="#d8d8d8"/><rect x="1807" y="2" width="1" height="5" fill="#d8d8d8"/><rect x="1813" y="2" width="1" height="5" fill="#d8d8d8"/><rect x="1820" y="2" width="1" height="5" fill="#d8d8d8"/><rect x="1826" y="2" width="1" height="5" fill="#d8d8d8"/><rect x="1833" y="4" width="1" height="3" fill="#d8d8d8"/><rect x="1839" y="2" width="1" height="5" fill="#d8d8d8"/><rect x="1846" y="2" width="1" height="5" fill="#d8d8d8"/><rect x="1852" y="2" width="1" height="5" fill="#d8d8d8"/></svg>
<div class="t" style="left:117px;top:777.0px;font-size:12.6px;color:#d0d6da;">5</div>
<div class="t" style="left:387.865px;width:40px;text-align:center;top:777.0px;font-size:12.6px;color:#d0d6da;">50</div>
<div class="t" style="left:711.715px;width:40px;text-align:center;top:777.0px;font-size:12.6px;color:#d0d6da;">100</div>
<div class="t" style="left:1035.565px;width:40px;text-align:center;top:777.0px;font-size:12.6px;color:#d0d6da;">150</div>
<div class="t" style="left:1359.4150000000002px;width:40px;text-align:center;top:777.0px;font-size:12.6px;color:#d0d6da;">200</div>
<div class="t" style="left:1683.265px;width:40px;text-align:center;top:777.0px;font-size:12.6px;color:#d0d6da;">250</div>
<svg class="a" style="left:0px;top:772px;" width="1860" height="5" viewBox="0 0 1860 5"><path d="M322.5 0V3H329.5V0" stroke="#2f6fe0" stroke-width="1.5" fill="none"/><path d="M530.5 0V3H537.5V0" stroke="#2f6fe0" stroke-width="1.5" fill="none"/><path d="M569.0 0V3H576.0V0" stroke="#2f6fe0" stroke-width="1.5" fill="none"/><path d="M621.0 0V3H628.0V0" stroke="#2f6fe0" stroke-width="1.5" fill="none"/><path d="M737.5 0V3H744.5V0" stroke="#2f6fe0" stroke-width="1.5" fill="none"/><path d="M854.5 0V3H861.5V0" stroke="#2f6fe0" stroke-width="1.5" fill="none"/><path d="M971.0 0V3H978.0V0" stroke="#2f6fe0" stroke-width="1.5" fill="none"/><path d="M1062.25 0V3H1069.25V0" stroke="#2f6fe0" stroke-width="1.5" fill="none"/><path d="M1197.5 0V3H1204.5V0" stroke="#2f6fe0" stroke-width="1.5" fill="none"/><path d="M1470.25 0V3H1477.25V0" stroke="#2f6fe0" stroke-width="1.5" fill="none"/><path d="M1535.25 0V3H1542.25V0" stroke="#2f6fe0" stroke-width="1.5" fill="none"/><path d="M1561.0 0V3H1568.0V0" stroke="#2f6fe0" stroke-width="1.5" fill="none"/><path d="M1670.5 0V3H1677.5V0" stroke="#2f6fe0" stroke-width="1.5" fill="none"/><path d="M1781.5 0V3H1788.5V0" stroke="#2f6fe0" stroke-width="1.5" fill="none"/><path d="M1833.25 0V3H1840.25V0" stroke="#2f6fe0" stroke-width="1.5" fill="none"/><path d="M401.5 0V3H413.5V0" stroke="#2f6fe0" stroke-width="1.5" fill="none"/></svg>
<div class="a" style="left:1834px;top:756px;width:26px;height:32px;background:#181818"></div>
<div class="t" style="left:1824px;top:755.0px;font-size:11.5px;color:#3a78e0;">270</div>
<svg class="a" style="left:1827px;top:764px;" width="14" height="7" viewBox="0 0 14 7"><path d="M0 0H14L7 7Z" fill="#3a78e0"/></svg>
<div class="a" style="left:1853px;top:765px;width:1px;height:15px;background:#e0e0e0"></div>
<div class="t" style="left:1838px;top:777.0px;font-size:12.6px;color:#d0d6da;">273</div>
<div class="a" style="left:1866px;top:757px;width:48px;height:30px;background:#393939;border-radius:3px"></div>
<div class="t" style="left:1866.0px;width:48px;text-align:center;top:766.0px;font-size:13px;color:#7a7a7a;">269</div>
<svg class="a" style="left:1920px;top:779px;" width="9" height="12" viewBox="0 0 9 12"><path d="M0.5 0.5L4.5 5L8.5 0.5M0.5 6L4.5 10.5L8.5 6" stroke="#9a9a9a" stroke-width="1.2" fill="none"/></svg>
<div class="a" style="left:58px;top:790px;width:1875px;height:30px;background:#323232"></div>
<div class="a" style="left:58px;top:820px;width:1875px;height:1px;background:#0e0e0e"></div>
<div class="a" style="left:58px;top:821px;width:1875px;height:1px;background:#3e3e3e"></div>
<div class="a" style="left:62px;top:794px;width:44px;height:20px;background:#383838;border:1px solid #222;border-radius:3px 0 0 3px"></div>
<div class="a" style="left:105px;top:794px;width:16px;height:20px;background:#4a4a4a;border:1px solid #222;border-radius:0 3px 3px 0"></div>
<svg class="a" style="left:110.0px;top:801.5px;" width="7" height="4" viewBox="0 0 7 4"><path d="M0 0H7L3.5 4Z" fill="#cfcfcf"/></svg>
<div class="t" style="left:65px;top:798.0px;font-size:13px;color:#cdd3d8;">24*</div>
<div class="t" style="left:129px;top:799.0px;font-size:12.6px;color:#cdd3d8;">TF</div>
<svg class="a" style="left:144.5px;top:801.0px;" width="7" height="5" viewBox="0 0 7 5"><path d="M0 0H7L3.5 5Z" fill="#cfcfcf"/></svg>
<div class="a" style="left:160px;top:793px;width:1px;height:20px;background:#4a4a4a"></div>
<div class="t" style="left:168px;top:799.0px;font-size:12.6px;color:#cdd3d8;">Visible</div>
<svg class="a" style="left:218.0px;top:801.0px;" width="7" height="5" viewBox="0 0 7 5"><path d="M0 0H7L3.5 5Z" fill="#cfcfcf"/></svg>
<div class="a" style="left:233px;top:793px;width:1px;height:20px;background:#4a4a4a"></div>
<svg class="a" style="left:765px;top:795px;" width="23" height="19" viewBox="0 0 23 19"><path d="M1 6H11" stroke="#b0b0b0" stroke-width="3.5"/><path d="M10 1L16 6L10 11Z" fill="#b0b0b0"/><path d="M16 11A7 6 0 0 1 3 12" stroke="#b0b0b0" stroke-width="2.5" fill="none"/><path d="M1 13L5 9L6 14Z" fill="#b0b0b0"/><path d="M15 14H22L18.5 18Z" fill="#ddd"/></svg>
<div class="a" style="left:798px;top:793px;width:17px;height:23px;background:linear-gradient(#4b4b4b,#3d3d3d);border:1px solid #242424;border-radius:3px"></div>
<svg class="a" style="left:798px;top:793px;" width="17" height="23" viewBox="0 0 17 23"><text x="5" y="16" font-size="13" fill="#d0d0d0" font-family="Liberation Serif">I</text></svg>
<div class="a" style="left:816px;top:793px;width:30px;height:23px;background:linear-gradient(#4b4b4b,#3d3d3d);border:1px solid #242424;border-radius:3px"></div>
<svg class="a" style="left:816px;top:793px;" width="30" height="23" viewBox="0 0 30 23"><rect x="8" y="5" width="2.5" height="12" fill="#b0b0b0"/><path d="M21 5V17L11 11Z" fill="#b0b0b0"/></svg>
<div class="a" style="left:848px;top:793px;width:30px;height:23px;background:linear-gradient(#4b4b4b,#3d3d3d);border:1px solid #242424;border-radius:3px"></div>
<svg class="a" style="left:848px;top:793px;" width="30" height="23" viewBox="0 0 30 23"><circle cx="9" cy="17" r="2" fill="none" stroke="#b0b0b0" stroke-width="1.2"/><path d="M9 15V6" stroke="#b0b0b0" stroke-width="1.2"/><path d="M22 5V17L12 11Z" fill="#b0b0b0"/></svg>
<div class="a" style="left:880px;top:793px;width:30px;height:23px;background:linear-gradient(#4b4b4b,#3d3d3d);border:1px solid #242424;border-radius:3px"></div>
<svg class="a" style="left:880px;top:793px;" width="30" height="23" viewBox="0 0 30 23"><path d="M19 5V17L9 11Z" fill="#b0b0b0"/><rect x="20" y="5" width="2.5" height="12" fill="#b0b0b0"/></svg>
<div class="a" style="left:912px;top:793px;width:30px;height:23px;background:linear-gradient(#4b4b4b,#3d3d3d);border:1px solid #242424;border-radius:3px"></div>
<svg class="a" style="left:912px;top:793px;" width="30" height="23" viewBox="0 0 30 23"><path d="M20 5V17L10 11Z" fill="#b0b0b0"/></svg>
<div class="a" style="left:945px;top:793px;width:46px;height:23px;background:#363636"></div>
<div class="t" style="left:957px;top:798.0px;font-size:13px;color:#ef8f22;">270</div>
<div class="a" style="left:994px;top:793px;width:30px;height:23px;background:linear-gradient(#4b4b4b,#3d3d3d);border:1px solid #242424;border-radius:3px"></div>
<svg class="a" style="left:994px;top:793px;" width="30" height="23" viewBox="0 0 30 23"><path d="M10 5V17L20 11Z" fill="#b0b0b0"/></svg>
<div class="a" style="left:1026px;top:793px;width:30px;height:23px;background:linear-gradient(#4b4b4b,#3d3d3d);border:1px solid #242424;border-radius:3px"></div>
<svg class="a" style="left:1026px;top:793px;" width="30" height="23" viewBox="0 0 30 23"><rect x="8" y="5" width="2.5" height="12" fill="#b0b0b0"/><path d="M11 5V17L21 11Z" fill="#b0b0b0"/></svg>
<div class="a" style="left:1058px;top:793px;width:30px;height:23px;background:linear-gradient(#4b4b4b,#3d3d3d);border:1px solid #242424;border-radius:3px"></div>
<svg class="a" style="left:1058px;top:793px;" width="30" height="23" viewBox="0 0 30 23"><path d="M8 5V17L18 11Z" fill="#b0b0b0"/><circle cx="21" cy="17" r="2" fill="none" stroke="#b0b0b0" stroke-width="1.2"/><path d="M21 15V6" stroke="#b0b0b0" stroke-width="1.2"/></svg>
<div class="a" style="left:1090px;top:793px;width:30px;height:23px;background:linear-gradient(#4b4b4b,#3d3d3d);border:1px solid #242424;border-radius:3px"></div>
<svg class="a" style="left:1090px;top:793px;" width="30" height="23" viewBox="0 0 30 23"><path d="M8 5V17L18 11Z" fill="#b0b0b0"/><rect x="19" y="5" width="2.5" height="12" fill="#b0b0b0"/></svg>
<div class="a" style="left:1122px;top:793px;width:16px;height:23px;background:linear-gradient(#4b4b4b,#3d3d3d);border:1px solid #242424;border-radius:3px"></div>
<svg class="a" style="left:1122px;top:793px;" width="16" height="23" viewBox="0 0 16 23"><text x="3" y="16" font-size="13" fill="#d0d0d0" font-family="Liberation Sans">O</text></svg>
<div class="a" style="left:1152px;top:794px;width:20px;height:21px;background:linear-gradient(#4b4b4b,#3d3d3d);border:1px solid #242424;border-radius:3px"></div>
<svg class="a" style="left:1152px;top:794px;" width="20" height="21" viewBox="0 0 20 21"><path d="M4 10L10 5V15ZM10 10L16 5V15Z" fill="#b0b0b0"/></svg>
<div class="a" style="left:1175px;top:794px;width:20px;height:21px;background:#2c2c2c;border:1px solid #242424;border-radius:3px"></div>
<div class="t" style="left:1177px;top:798.0px;font-size:13px;color:#cdd3d8;">10</div>
<div class="a" style="left:1198px;top:794px;width:20px;height:21px;background:linear-gradient(#4b4b4b,#3d3d3d);border:1px solid #242424;border-radius:3px"></div>
<svg class="a" style="left:1198px;top:794px;" width="20" height="21" viewBox="0 0 20 21"><path d="M4 5V15L10 10ZM10 5V15L16 10Z" fill="#b0b0b0"/></svg>
<svg class="a" style="left:1768px;top:797px;" width="16" height="13" viewBox="0 0 16 13"><rect x="0.75" y="0.75" width="14.5" height="11.5" fill="none" stroke="#b0b0b0" stroke-width="1.5"/><path d="M5 3V10L11 6.5Z" fill="#b0b0b0"/><rect x="0" y="0" width="16" height="13" fill="#b0b0b0" opacity="0.35"/></svg>
<svg class="a" style="left:1791px;top:797px;" width="14" height="13" viewBox="0 0 14 13"><rect x="0" y="0" width="14" height="13" fill="#b0b0b0"/><circle cx="7" cy="6.5" r="4" fill="#323232"/><circle cx="7" cy="6.5" r="3" fill="#b0b0b0"/></svg>
<svg class="a" style="left:1815px;top:795px;" width="13" height="15" viewBox="0 0 13 15"><path d="M3 7V4.5A3.5 3.5 0 0 1 10 4.5V7" stroke="#b0b0b0" stroke-width="2" fill="none"/><rect x="0" y="7" width="13" height="8" fill="#b0b0b0"/><rect x="5.5" y="9" width="2" height="4" fill="#323232"/></svg>
<svg class="a" style="left:1841px;top:795px;" width="18" height="16" viewBox="0 0 18 16"><path d="M6 1V9L10 5Z" fill="#b0b0b0"/><path d="M6 1V13" stroke="#b0b0b0"/><path d="M1 11V15H17V11M5 13V15M9 13V15M13 13V15" stroke="#b0b0b0" stroke-width="1.2" fill="none"/></svg>
<div class="a" style="left:1866px;top:793px;width:48px;height:23px;background:#393939;border-radius:3px"></div>
<div class="t" style="left:1866.0px;width:48px;text-align:center;top:798.0px;font-size:13px;color:#cdd3d8;">265</div>
<div class="a" style="left:58px;top:822px;width:1875px;height:29px;background:#262626"></div>
<svg class="a" style="left:61px;top:825px;" width="16" height="16" viewBox="0 0 16 16"><rect x="0" y="0" width="8" height="10" fill="#b0b0b0"/><rect x="0" y="10" width="8" height="6" fill="#8a8a8a"/><rect x="8" y="0" width="8" height="16" fill="#5c5c5c"/></svg>
<div class="a" style="left:82px;top:824px;width:121px;height:27px;background:#323232;border:1px solid #202020;border-bottom:none;border-radius:3px 3px 0 0"></div>
<div class="t" style="left:96px;top:833.0px;font-size:12.6px;color:#d6dadd;">Node Graph</div>
<svg class="a" style="left:175px;top:831px;" width="12" height="12" viewBox="0 0 12 12"><circle cx="6" cy="6" r="6" fill="#3a3a3a"/><path d="M3.5 3.5L8.5 8.5M8.5 3.5L3.5 8.5" stroke="#777" stroke-width="1.8"/></svg>
<div class="a" style="left:203px;top:827px;width:127px;height:24px;background:#2a2a2a;border:1px solid #1e1e1e;border-bottom:none;border-radius:3px 3px 0 0"></div>
<div class="t" style="left:218px;top:833.0px;font-size:12.6px;color:#d6dadd;">Curve Editor</div>
<svg class="a" style="left:301px;top:832px;" width="12" height="12" viewBox="0 0 12 12"><circle cx="6" cy="6" r="6" fill="#3a3a3a"/><path d="M3.5 3.5L8.5 8.5M8.5 3.5L3.5 8.5" stroke="#777" stroke-width="1.8"/></svg>
<div class="a" style="left:330px;top:827px;width:120px;height:24px;background:#2a2a2a;border:1px solid #1e1e1e;border-bottom:none;border-radius:3px 3px 0 0"></div>
<div class="t" style="left:344px;top:833.0px;font-size:12.6px;color:#d6dadd;">Dope Sheet</div>
<svg class="a" style="left:422px;top:832px;" width="12" height="12" viewBox="0 0 12 12"><circle cx="6" cy="6" r="6" fill="#3a3a3a"/><path d="M3.5 3.5L8.5 8.5M8.5 3.5L3.5 8.5" stroke="#777" stroke-width="1.8"/></svg>
<div class="a" style="left:58px;top:851px;width:1875px;height:505px;background:#333333;overflow:hidden"></div>
<div class="a" style="left:388px;top:881px;width:79px;height:78px;background:#111"></div>
<div class="a" style="left:389px;top:882px;width:78px;height:77px;background:#fff"></div>
<div class="a" style="left:389px;top:925px;width:78px;height:34px;background:linear-gradient(#c4c4c4,#8a8a8a)"></div>
<div class="a" style="left:390px;top:882px;width:76px;height:43px;background:radial-gradient(ellipse 75% 80% at 62% 62%,rgba(0,0,0,0) 45%,rgba(15,35,15,0.55) 100%),linear-gradient(180deg,#416e3b 0%,#4d7e46 45%,#6a9660 80%,#779f6c 100%);overflow:hidden">
<div class="a" style="left:0;top:0;width:6px;height:43px;background:linear-gradient(90deg,#6a6258,#a89e8e)"></div>
<div class="a" style="left:0;top:34px;width:42px;height:9px;background:#8e877a;clip-path:polygon(0 10%,100% 100%,0 100%)"></div>
<div class="a" style="left:35px;top:17px;width:2px;height:2px;background:#6a4a38;border-radius:1px"></div>
<div class="a" style="left:34px;top:19px;width:3px;height:9px;background:#4a3a34;opacity:.9"></div>
<div class="a" style="left:35px;top:28px;width:2px;height:7px;background:#7a6e60;opacity:.9"></div>
</div>
<div class="t" style="left:368.0px;width:120px;text-align:center;top:931.0px;font-size:11.5px;color:#111;font-family:"Liberation Sans",sans-serif;letter-spacing:0.2px;-webkit-text-stroke:0.35px currentColor">Read8</div>
<div class="t" style="left:308.0px;width:240px;text-align:center;top:943.0px;font-size:11.5px;color:#111;font-family:"Liberation Sans",sans-serif;letter-spacing:0.5px;-webkit-text-stroke:0.35px currentColor">A003_01070217_C010.mov</div>
<svg class="a" style="left:391px;top:955px;" width="30" height="3" viewBox="0 0 30 3"><rect x="0" y="0" width="7" height="3" fill="#f00"/><rect x="7" y="0" width="7" height="3" fill="#0f0"/><rect x="14" y="0" width="8" height="3" fill="#00f"/><rect x="22" y="0" width="8" height="3" fill="#fff"/></svg>
<svg class="a" style="left:423.5px;top:960.5px;" width="8" height="8" viewBox="0 0 8 8"><path d="M0 0H8L4 8Z" fill="#000"/></svg>
<div class="a" style="left:498px;top:881px;width:79px;height:78px;background:#111"></div>
<div class="a" style="left:499px;top:882px;width:78px;height:77px;background:#fff"></div>
<div class="a" style="left:499px;top:925px;width:78px;height:34px;background:linear-gradient(#c4c4c4,#8a8a8a)"></div>
<div class="a" style="left:500px;top:882px;width:76px;height:43px;background:radial-gradient(ellipse 75% 80% at 62% 62%,rgba(0,0,0,0) 45%,rgba(15,35,15,0.55) 100%),linear-gradient(180deg,#416e3b 0%,#4d7e46 45%,#6a9660 80%,#779f6c 100%);overflow:hidden">
<div class="a" style="left:64px;top:8px;width:10px;height:12px;background:#7a6a40;border:1px solid #3a3020"></div>
<div class="a" style="left:70px;top:0;width:6px;height:43px;background:linear-gradient(90deg,#8a857d,#b8b2a8)"></div>
<div class="a" style="left:27px;top:34px;width:49px;height:9px;background:#938c7e;clip-path:polygon(0 100%,100% 0,100% 100%)"></div>
<div class="a" style="left:62px;top:18px;width:1px;height:21px;background:#2a3a28"></div>
<div class="a" style="left:35px;top:17px;width:2px;height:2px;background:#6a4a38;border-radius:1px"></div>
<div class="a" style="left:34px;top:19px;width:3px;height:9px;background:#4a3a34;opacity:.9"></div>
<div class="a" style="left:35px;top:28px;width:2px;height:7px;background:#7a6e60;opacity:.9"></div>
</div>
<div class="t" style="left:478.0px;width:120px;text-align:center;top:931.0px;font-size:11.5px;color:#111;font-family:"Liberation Sans",sans-serif;letter-spacing:0.2px;-webkit-text-stroke:0.35px currentColor">Read3</div>
<div class="t" style="left:418.0px;width:240px;text-align:center;top:943.0px;font-size:11.5px;color:#111;font-family:"Liberation Sans",sans-serif;letter-spacing:0.5px;-webkit-text-stroke:0.35px currentColor">A003_01070210_C009.mov</div>
<svg class="a" style="left:501px;top:955px;" width="30" height="3" viewBox="0 0 30 3"><rect x="0" y="0" width="7" height="3" fill="#f00"/><rect x="7" y="0" width="7" height="3" fill="#0f0"/><rect x="14" y="0" width="8" height="3" fill="#00f"/><rect x="22" y="0" width="8" height="3" fill="#fff"/></svg>
<svg class="a" style="left:533.5px;top:960.5px;" width="8" height="8" viewBox="0 0 8 8"><path d="M0 0H8L4 8Z" fill="#000"/></svg>
<div class="a" style="left:608px;top:881px;width:79px;height:78px;background:#111"></div>
<div class="a" style="left:609px;top:882px;width:78px;height:77px;background:#fff"></div>
<div class="a" style="left:609px;top:925px;width:78px;height:34px;background:linear-gradient(#c4c4c4,#8a8a8a)"></div>
<div class="a" style="left:610px;top:882px;width:76px;height:43px;background:radial-gradient(ellipse 75% 80% at 62% 62%,rgba(0,0,0,0) 45%,rgba(15,35,15,0.55) 100%),linear-gradient(180deg,#416e3b 0%,#4d7e46 45%,#6a9660 80%,#779f6c 100%);overflow:hidden">
<div class="a" style="left:64px;top:3px;width:2px;height:16px;background:#eee"></div>
<div class="a" style="left:65px;top:19px;width:1px;height:21px;background:#2a3a28"></div>
<div class="a" style="left:73px;top:8px;width:3px;height:35px;background:#9a9488"></div>
<div class="a" style="left:37px;top:17px;width:2px;height:2px;background:#6a4a38;border-radius:1px"></div>
<div class="a" style="left:36px;top:19px;width:3px;height:9px;background:#4a3a34;opacity:.9"></div>
<div class="a" style="left:37px;top:28px;width:2px;height:7px;background:#7a6e60;opacity:.9"></div>
</div>
<div class="t" style="left:588.0px;width:120px;text-align:center;top:931.0px;font-size:11.5px;color:#111;font-family:"Liberation Sans",sans-serif;letter-spacing:0.2px;-webkit-text-stroke:0.35px currentColor">Read1</div>
<div class="t" style="left:528.0px;width:240px;text-align:center;top:943.0px;font-size:11.5px;color:#111;font-family:"Liberation Sans",sans-serif;letter-spacing:0.5px;-webkit-text-stroke:0.35px currentColor">A003_01070130_C004.mov</div>
<svg class="a" style="left:611px;top:955px;" width="30" height="3" viewBox="0 0 30 3"><rect x="0" y="0" width="7" height="3" fill="#f00"/><rect x="7" y="0" width="7" height="3" fill="#0f0"/><rect x="14" y="0" width="8" height="3" fill="#00f"/><rect x="22" y="0" width="8" height="3" fill="#fff"/></svg>
<svg class="a" style="left:643.5px;top:960.5px;" width="8" height="8" viewBox="0 0 8 8"><path d="M0 0H8L4 8Z" fill="#000"/></svg>
<div class="a" style="left:718px;top:881px;width:79px;height:78px;background:#111"></div>
<div class="a" style="left:719px;top:882px;width:78px;height:77px;background:#fff"></div>
<div class="a" style="left:719px;top:925px;width:78px;height:34px;background:linear-gradient(#c4c4c4,#8a8a8a)"></div>
<div class="a" style="left:720px;top:882px;width:76px;height:43px;background:radial-gradient(ellipse 75% 80% at 62% 62%,rgba(0,0,0,0) 45%,rgba(15,35,15,0.55) 100%),linear-gradient(180deg,#416e3b 0%,#4d7e46 45%,#6a9660 80%,#779f6c 100%);overflow:hidden">
<div class="a" style="left:64px;top:8px;width:10px;height:12px;background:#7a6a40;border:1px solid #3a3020"></div>
<div class="a" style="left:70px;top:0;width:6px;height:43px;background:linear-gradient(90deg,#8a857d,#b8b2a8)"></div>
<div class="a" style="left:27px;top:34px;width:49px;height:9px;background:#938c7e;clip-path:polygon(0 100%,100% 0,100% 100%)"></div>
<div class="a" style="left:62px;top:18px;width:1px;height:21px;background:#2a3a28"></div>
<div class="a" style="left:35px;top:17px;width:2px;height:2px;background:#6a4a38;border-radius:1px"></div>
<div class="a" style="left:34px;top:19px;width:3px;height:9px;background:#4a3a34;opacity:.9"></div>
<div class="a" style="left:35px;top:28px;width:2px;height:7px;background:#7a6e60;opacity:.9"></div>
</div>
<div class="t" style="left:698.0px;width:120px;text-align:center;top:931.0px;font-size:11.5px;color:#111;font-family:"Liberation Sans",sans-serif;letter-spacing:0.2px;-webkit-text-stroke:0.35px currentColor">Read5</div>
<div class="t" style="left:638.0px;width:240px;text-align:center;top:943.0px;font-size:11.5px;color:#111;font-family:"Liberation Sans",sans-serif;letter-spacing:0.5px;-webkit-text-stroke:0.35px currentColor">A003_01070215_C008.mov</div>
<svg class="a" style="left:721px;top:955px;" width="30" height="3" viewBox="0 0 30 3"><rect x="0" y="0" width="7" height="3" fill="#f00"/><rect x="7" y="0" width="7" height="3" fill="#0f0"/><rect x="14" y="0" width="8" height="3" fill="#00f"/><rect x="22" y="0" width="8" height="3" fill="#fff"/></svg>
<svg class="a" style="left:753.5px;top:960.5px;" width="8" height="8" viewBox="0 0 8 8"><path d="M0 0H8L4 8Z" fill="#000"/></svg>
<div class="a" style="left:828px;top:881px;width:79px;height:78px;background:#111"></div>
<div class="a" style="left:829px;top:882px;width:78px;height:77px;background:#fff"></div>
<div class="a" style="left:829px;top:925px;width:78px;height:34px;background:linear-gradient(#c4c4c4,#8a8a8a)"></div>
<div class="a" style="left:830px;top:882px;width:76px;height:43px;background:radial-gradient(ellipse 75% 80% at 62% 62%,rgba(0,0,0,0) 45%,rgba(15,35,15,0.55) 100%),linear-gradient(180deg,#416e3b 0%,#4d7e46 45%,#6a9660 80%,#779f6c 100%);overflow:hidden">
<div class="a" style="left:39px;top:17px;width:2px;height:2px;background:#6a4a38;border-radius:1px"></div>
<div class="a" style="left:39px;top:19px;width:3px;height:9px;background:#4a3a34;opacity:.9"></div>
<div class="a" style="left:39px;top:28px;width:2px;height:7px;background:#7a6e60;opacity:.9"></div>
</div>
<div class="t" style="left:808.0px;width:120px;text-align:center;top:931.0px;font-size:11.5px;color:#111;font-family:"Liberation Sans",sans-serif;letter-spacing:0.2px;-webkit-text-stroke:0.35px currentColor">Read6</div>
<div class="t" style="left:748.0px;width:240px;text-align:center;top:943.0px;font-size:11.5px;color:#111;font-family:"Liberation Sans",sans-serif;letter-spacing:0.5px;-webkit-text-stroke:0.35px currentColor">A003_01070216_C010.mov</div>
<svg class="a" style="left:831px;top:955px;" width="30" height="3" viewBox="0 0 30 3"><rect x="0" y="0" width="7" height="3" fill="#f00"/><rect x="7" y="0" width="7" height="3" fill="#0f0"/><rect x="14" y="0" width="8" height="3" fill="#00f"/><rect x="22" y="0" width="8" height="3" fill="#fff"/></svg>
<svg class="a" style="left:863.5px;top:960.5px;" width="8" height="8" viewBox="0 0 8 8"><path d="M0 0H8L4 8Z" fill="#000"/></svg>
<div class="a" style="left:1312px;top:851px;width:79px;height:76px;background:#111"></div>
<div class="a" style="left:1313px;top:852px;width:78px;height:75px;background:#fff"></div>
<div class="a" style="left:1313px;top:893px;width:78px;height:34px;background:linear-gradient(#c4c4c4,#8a8a8a)"></div>
<div class="a" style="left:1314px;top:852px;width:76px;height:41px;background:radial-gradient(ellipse 75% 80% at 62% 62%,rgba(0,0,0,0) 45%,rgba(15,35,15,0.55) 100%),linear-gradient(180deg,#416e3b 0%,#4d7e46 45%,#6a9660 80%,#779f6c 100%);overflow:hidden">
<div class="a" style="left:34px;top:34px;width:42px;height:7px;background:#8e8a80;clip-path:polygon(0 100%,100% 0,100% 100%)"></div>
<div class="a" style="left:31px;top:16px;width:2px;height:2px;background:#6a4a38;border-radius:1px"></div>
<div class="a" style="left:30px;top:18px;width:3px;height:8px;background:#4a3a34;opacity:.9"></div>
<div class="a" style="left:31px;top:27px;width:2px;height:7px;background:#7a6e60;opacity:.9"></div>
</div>
<div class="t" style="left:1292.0px;width:120px;text-align:center;top:899.0px;font-size:11.5px;color:#111;font-family:"Liberation Sans",sans-serif;letter-spacing:0.2px;-webkit-text-stroke:0.35px currentColor">Read16</div>
<div class="t" style="left:1232.0px;width:240px;text-align:center;top:911.0px;font-size:11.5px;color:#111;font-family:"Liberation Sans",sans-serif;letter-spacing:0.5px;-webkit-text-stroke:0.35px currentColor">A003_01070218_C014.mov</div>
<svg class="a" style="left:1315px;top:923px;" width="30" height="3" viewBox="0 0 30 3"><rect x="0" y="0" width="7" height="3" fill="#f00"/><rect x="7" y="0" width="7" height="3" fill="#0f0"/><rect x="14" y="0" width="8" height="3" fill="#00f"/><rect x="22" y="0" width="8" height="3" fill="#fff"/></svg>
<div class="a" style="left:1521px;top:852px;width:79px;height:78px;background:#111"></div>
<div class="a" style="left:1522px;top:853px;width:78px;height:77px;background:#fff"></div>
<div class="a" style="left:1522px;top:896px;width:78px;height:34px;background:linear-gradient(#c4c4c4,#8a8a8a)"></div>
<div class="a" style="left:1523px;top:853px;width:76px;height:43px;background:radial-gradient(ellipse 75% 80% at 62% 62%,rgba(0,0,0,0) 45%,rgba(15,35,15,0.55) 100%),linear-gradient(180deg,#416e3b 0%,#4d7e46 45%,#6a9660 80%,#779f6c 100%);overflow:hidden">
</div>
<div class="t" style="left:1501.0px;width:120px;text-align:center;top:902.0px;font-size:11.5px;color:#111;font-family:"Liberation Sans",sans-serif;letter-spacing:0.2px;-webkit-text-stroke:0.35px currentColor">Read7</div>
<div class="t" style="left:1441.0px;width:240px;text-align:center;top:914.0px;font-size:11.5px;color:#111;font-family:"Liberation Sans",sans-serif;letter-spacing:0.5px;-webkit-text-stroke:0.35px currentColor">A003_01070216_C011.mov</div>
<svg class="a" style="left:1524px;top:926px;" width="30" height="3" viewBox="0 0 30 3"><rect x="0" y="0" width="7" height="3" fill="#f00"/><rect x="7" y="0" width="7" height="3" fill="#0f0"/><rect x="14" y="0" width="8" height="3" fill="#00f"/><rect x="22" y="0" width="8" height="3" fill="#fff"/></svg>
<svg class="a" style="left:1556.5px;top:931.5px;" width="8" height="8" viewBox="0 0 8 8"><path d="M0 0H8L4 8Z" fill="#000"/></svg>
<svg class="a" style="left:0px;top:0px;" width="1600" height="1360" viewBox="0 0 1600 1360"><path d="M1352 928V958" stroke="#000" stroke-width="2.2"/><path d="M1347 953L1352 962L1357 953Z" fill="#000"/><path d="M1346 967H1236" stroke="#000" stroke-width="2.2"/><path d="M1240 962L1231 967L1240 972Z" fill="#000"/><path d="M1352 973V1104" stroke="#000" stroke-width="2.2"/><path d="M1351 1116V1220" stroke="#000" stroke-width="2.2"/><path d="M1346 1216L1351 1225L1356 1216Z" fill="#000"/><path d="M1190 983V1036" stroke="#000" stroke-width="2.2"/><path d="M1185 1032L1190 1042L1195 1032Z" fill="#000"/><path d="M1174 918L1184 948" stroke="#000" stroke-width="2"/><path d="M1178 940L1185 952L1187 938Z" fill="#000"/><path d="M1140 930L1167 952" stroke="#000" stroke-width="2"/><path d="M989 1105L1014 1124" stroke="#f4b060" stroke-width="1.8"/><path d="M1006 1123L1017 1126L1011 1116Z" fill="#f4b060"/><path d="M1016 1093L1028 1124" stroke="#f4b060" stroke-width="1.8"/><path d="M1023 1118L1028 1126L1031 1116Z" fill="#f4b060"/><path d="M1045 1093L1035 1124" stroke="#f4b060" stroke-width="1.8"/><path d="M1031 1117L1034 1126L1040 1119Z" fill="#f4b060"/><path d="M1158 1136H1080" stroke="#f4b060" stroke-width="2"/><path d="M1082 1131L1072 1136L1082 1141Z" fill="#f4b060"/><path d="M1031 1146V1224" stroke="#f4b060" stroke-width="2"/><path d="M1076 1239L1300 1241" stroke="#000" stroke-width="2.2"/><path d="M1298 1236L1310 1241L1298 1246Z" fill="#000"/><path d="M1032 1256V1340" stroke="#000" stroke-width="1.5" stroke-dasharray="1.5 2"/><path d="M1027 1336L1031 1346L1035 1336Z" fill="#000"/></svg>
<svg class="a" style="left:1345px;top:961px;" width="14" height="14" viewBox="0 0 14 14"><defs><radialGradient id="dg" cx="40%" cy="35%"><stop offset="0" stop-color="#eee"/><stop offset="1" stop-color="#888"/></radialGradient></defs><circle cx="7" cy="6.5" r="5.5" fill="url(#dg)" stroke="#222" stroke-width="0.8"/></svg>
<svg class="a" style="left:1344px;top:1104px;" width="14" height="14" viewBox="0 0 14 14"><circle cx="7" cy="6.5" r="5.5" fill="url(#dg)" stroke="#222" stroke-width="0.8"/></svg>
<div class="a" style="left:1150px;top:951px;width:80px;height:32px;background:#111"></div>
<div class="a" style="left:1151px;top:952px;width:79px;height:31px;background:linear-gradient(#f2f2f2,#8c8c8c)"></div>
<div class="t" style="left:1130.0px;width:120px;text-align:center;top:957.0px;font-size:11.5px;color:#111;font-family:"Liberation Sans",sans-serif;letter-spacing:0.2px;-webkit-text-stroke:0.35px currentColor">Denoise1</div>
<div class="t" style="left:1130.0px;width:120px;text-align:center;top:969.0px;font-size:11.5px;color:#111;font-family:"Liberation Sans",sans-serif;letter-spacing:0.5px;-webkit-text-stroke:0.35px currentColor">(Result)</div>
<svg class="a" style="left:1153px;top:979px;" width="30" height="3" viewBox="0 0 30 3"><rect x="0" y="0" width="7" height="3" fill="#f00"/><rect x="7" y="0" width="7" height="3" fill="#0f0"/><rect x="14" y="0" width="8" height="3" fill="#00f"/><rect x="22" y="0" width="8" height="3" fill="#fff"/></svg>
<div class="t" style="left:1155.5px;top:922.0px;font-size:11px;color:#f4b060;font-family:"Liberation Sans",sans-serif;letter-spacing:0.2px;-webkit-text-stroke:0.35px currentColor">Noise</div>
<div class="t" style="left:1125.5px;top:939.0px;font-size:11px;color:#f4b060;font-family:"Liberation Sans",sans-serif;letter-spacing:0.2px;-webkit-text-stroke:0.35px currentColor">Motion</div>
<div class="t" style="left:1239.5px;top:964.0px;font-size:11px;color:#f4b060;font-family:"Liberation Sans",sans-serif;letter-spacing:0.2px;-webkit-text-stroke:0.35px currentColor">Source</div>
<div class="a" style="left:1150px;top:1042px;width:80px;height:32px;background:#111"></div>
<div class="a" style="left:1151px;top:1043px;width:79px;height:31px;background:linear-gradient(#eeee00,#a8a400)"></div>
<div class="t" style="left:1130.0px;width:120px;text-align:center;top:1048.0px;font-size:11.5px;color:#111;font-family:"Liberation Sans",sans-serif;letter-spacing:0.2px;-webkit-text-stroke:0.35px currentColor">Write1</div>
<div class="t" style="left:1060.0px;width:260px;text-align:center;top:1060.0px;font-size:11.5px;color:#111;font-family:"Liberation Sans",sans-serif;letter-spacing:0.5px;-webkit-text-stroke:0.35px currentColor">A003_0170218_C014.00270.DPX</div>
<svg class="a" style="left:1153px;top:1070px;" width="30" height="3" viewBox="0 0 30 3"><rect x="0" y="0" width="7" height="3" fill="#f00"/><rect x="7" y="0" width="7" height="3" fill="#0f0"/><rect x="14" y="0" width="8" height="3" fill="#00f"/></svg>
<svg class="a" style="left:1186px;top:1075px;" width="8" height="8" viewBox="0 0 8 8"><path d="M0 0H8L4 8Z" fill="#000"/></svg>
<div class="a" style="left:991px;top:1126px;width:80px;height:20px;background:#111"></div>
<div class="a" style="left:992px;top:1127px;width:79px;height:19px;background:linear-gradient(#d8d8d8,#8a8a8a)"></div>
<div class="t" style="left:971.0px;width:120px;text-align:center;top:1132.0px;font-size:11.5px;color:#111;font-family:"Liberation Sans",sans-serif;letter-spacing:0.2px;-webkit-text-stroke:0.35px currentColor">Keylight1</div>
<svg class="a" style="left:994px;top:1142px;" width="30" height="3" viewBox="0 0 30 3"><rect x="0" y="0" width="7" height="3" fill="#f00"/><rect x="7" y="0" width="7" height="3" fill="#0f0"/><rect x="14" y="0" width="8" height="3" fill="#00f"/><rect x="22" y="0" width="8" height="3" fill="#fff"/></svg>
<div class="t" style="left:997px;top:1102.0px;font-size:11px;color:#d8e0e8;font-family:"Liberation Sans",sans-serif;letter-spacing:0.2px;-webkit-text-stroke:0.35px currentColor">Bg</div>
<div class="t" style="left:1000px;top:1109.0px;font-size:11px;color:#d8e0e8;font-family:"Liberation Sans",sans-serif;letter-spacing:0.2px;-webkit-text-stroke:0.35px currentColor">OutM</div>
<div class="t" style="left:1032px;top:1097.0px;font-size:11px;color:#d8e0e8;font-family:"Liberation Sans",sans-serif;letter-spacing:0.2px;-webkit-text-stroke:0.35px currentColor">InM</div>
<div class="t" style="left:1080px;top:1133.0px;font-size:11px;color:#e8e8e8;font-family:"Liberation Sans",sans-serif;letter-spacing:0.2px;-webkit-text-stroke:0.35px currentColor">Source</div>
<div class="a" style="left:1158px;top:1097px;width:79px;height:78px;background:#111"></div>
<div class="a" style="left:1159px;top:1098px;width:78px;height:77px;background:#fff"></div>
<div class="a" style="left:1159px;top:1141px;width:78px;height:34px;background:linear-gradient(#c4c4c4,#8a8a8a)"></div>
<div class="a" style="left:1160px;top:1098px;width:76px;height:43px;background:radial-gradient(ellipse 75% 80% at 62% 62%,rgba(0,0,0,0) 45%,rgba(15,35,15,0.55) 100%),linear-gradient(180deg,#416e3b 0%,#4d7e46 45%,#6a9660 80%,#779f6c 100%);overflow:hidden">
<div class="a" style="left:33px;top:17px;width:2px;height:2px;background:#6a4a38;border-radius:1px"></div>
<div class="a" style="left:33px;top:19px;width:3px;height:9px;background:#4a3a34;opacity:.9"></div>
<div class="a" style="left:33px;top:28px;width:2px;height:7px;background:#7a6e60;opacity:.9"></div>
</div>
<div class="t" style="left:1138.0px;width:120px;text-align:center;top:1147.0px;font-size:11.5px;color:#111;font-family:"Liberation Sans",sans-serif;letter-spacing:0.2px;-webkit-text-stroke:0.35px currentColor">Read2</div>
<div class="t" style="left:1078.0px;width:240px;text-align:center;top:1159.0px;font-size:11.5px;color:#111;font-family:"Liberation Sans",sans-serif;letter-spacing:0.5px;-webkit-text-stroke:0.35px currentColor">A003_0170218_C014.00269.DPX</div>
<svg class="a" style="left:1161px;top:1171px;" width="30" height="3" viewBox="0 0 30 3"><rect x="0" y="0" width="7" height="3" fill="#f00"/><rect x="7" y="0" width="7" height="3" fill="#0f0"/><rect x="14" y="0" width="8" height="3" fill="#00f"/></svg>
<div class="a" style="left:993px;top:1223px;width:81px;height:33px;background:#111"></div>
<div class="a" style="left:994px;top:1224px;width:79px;height:31px;background:linear-gradient(#80e880,#3c7c3c)"></div>
<div class="a" style="left:996px;top:1226px;width:75px;height:27px;background:#fbb765"></div>
<div class="t" style="left:973.0px;width:120px;text-align:center;top:1229.0px;font-size:11.5px;color:#111;font-family:"Liberation Sans",sans-serif;letter-spacing:0.2px;-webkit-text-stroke:0.35px currentColor">Roto1</div>
<div class="t" style="left:973.0px;width:120px;text-align:center;top:1241.0px;font-size:11.5px;color:#111;font-family:"Liberation Sans",sans-serif;letter-spacing:0.5px;-webkit-text-stroke:0.35px currentColor">(alpha)</div>
<svg class="a" style="left:996px;top:1250px;" width="40" height="3" viewBox="0 0 40 3"><rect x="0" y="0" width="2" height="3" fill="#f00"/><rect x="8" y="0" width="2" height="3" fill="#0f0"/><rect x="15" y="0" width="2" height="3" fill="#00f"/><rect x="19" y="0" width="8" height="3" fill="#fff"/></svg>
<svg class="a" style="left:1068px;top:1217px;" width="10" height="10" viewBox="0 0 10 10"><circle cx="5" cy="5" r="4" fill="#c84a4a"/><path d="M3 7L5 3L7 7" stroke="#fff" stroke-width="1" fill="none"/></svg>
<svg class="a" style="left:988px;top:1235px;" width="5" height="8" viewBox="0 0 5 8"><path d="M0 0L5 4L0 8Z" fill="#f4b060"/></svg>
<svg class="a" style="left:1073px;top:1235px;" width="5" height="8" viewBox="0 0 5 8"><path d="M5 0L0 4L5 8Z" fill="#f4b060"/></svg>
<div class="a" style="left:1311px;top:1225px;width:80px;height:32px;background:#111"></div>
<div class="a" style="left:1312px;top:1226px;width:78px;height:30px;background:linear-gradient(#b04878,#6e2848)"></div>
<div class="t" style="left:1291.0px;width:120px;text-align:center;top:1231.0px;font-size:11.5px;color:#111;font-family:"Liberation Sans",sans-serif;letter-spacing:0.2px;-webkit-text-stroke:0.35px currentColor">Copy1</div>
<div class="t" style="left:1251.0px;width:200px;text-align:center;top:1243.0px;font-size:11.5px;color:#111;font-family:"Liberation Sans",sans-serif;letter-spacing:0.5px;-webkit-text-stroke:0.35px currentColor">(alpha -&gt; alpha)</div>
<svg class="a" style="left:1316px;top:1252px;" width="30" height="3" viewBox="0 0 30 3"><rect x="0" y="0" width="2" height="3" fill="#f00"/><rect x="8" y="0" width="2" height="3" fill="#0f0"/><rect x="15" y="0" width="2" height="3" fill="#00f"/><rect x="19" y="0" width="8" height="3" fill="#fff"/></svg>
<svg class="a" style="left:1347px;top:1257px;" width="8" height="8" viewBox="0 0 8 8"><path d="M0 0H8L4 8Z" fill="#000"/></svg>
<div class="t" style="left:1346px;top:1208.0px;font-size:11px;color:#f4b060;font-family:"Liberation Sans",sans-serif;letter-spacing:0.2px;-webkit-text-stroke:0.35px currentColor">B</div>
<div class="t" style="left:1292px;top:1239.0px;font-size:11px;color:#f4b060;font-family:"Liberation Sans",sans-serif;letter-spacing:0.2px;-webkit-text-stroke:0.35px currentColor">A</div>
<div class="t" style="left:1027px;top:1332.0px;font-size:11px;color:#f4b060;font-family:"Liberation Sans",sans-serif;letter-spacing:0.2px;-webkit-text-stroke:0.35px currentColor">1</div>
<svg class="a" style="left:990px;top:1347px;" width="82" height="9" viewBox="0 0 82 9"><defs><linearGradient id="vg" x1="0" y1="0" x2="0" y2="1"><stop offset="0" stop-color="#fafafa"/><stop offset="1" stop-color="#c8c8c8"/></linearGradient></defs><path d="M3.5 0.5H77.5L81 9H0Z" fill="url(#vg)" stroke="#111" stroke-width="1"/></svg>
<div class="a" style="left:1651px;top:1279px;width:282px;height:1px;background:#cfcfcf"></div>
<div class="a" style="left:1651px;top:1279px;width:1px;height:77px;background:#cfcfcf"></div>
<div class="a" style="left:1652px;top:1281px;width:4px;height:4px;border:1px solid #cfcfcf"></div>
<div class="a" style="left:1932px;top:1279px;width:1px;height:77px;background:#111"></div>
<div class="a" style="left:1662px;top:1284px;width:261px;height:70px;background:#574848;border:1px solid #d8a8a8"></div>
<svg class="a" style="left:1640px;top:1260px;" width="300" height="96" viewBox="0 0 300 96"><rect x="67" y="31" width="11" height="5" fill="#b8b4b4"/><rect x="67" y="25" width="11" height="6" fill="#6e8e62"/><rect x="82" y="31" width="11" height="5" fill="#b8b4b4"/><rect x="82" y="25" width="11" height="6" fill="#6e8e62"/><rect x="98" y="31" width="11" height="5" fill="#b8b4b4"/><rect x="98" y="25" width="11" height="6" fill="#6e8e62"/><rect x="113" y="31" width="11" height="5" fill="#b8b4b4"/><rect x="113" y="25" width="11" height="6" fill="#6e8e62"/><rect x="128" y="31" width="11" height="5" fill="#b8b4b4"/><rect x="128" y="25" width="11" height="6" fill="#6e8e62"/><rect x="195" y="27" width="11" height="5" fill="#b8b4b4"/><rect x="195" y="21" width="11" height="6" fill="#6e8e62"/><rect x="224" y="27" width="11" height="5" fill="#b8b4b4"/><rect x="224" y="21" width="11" height="6" fill="#6e8e62"/><rect x="173" y="35" width="11" height="4" fill="#d0cccc"/><rect x="173" y="47" width="11" height="4" fill="#c8c410"/><rect x="200" y="36" width="2" height="2" fill="#eee"/><rect x="200" y="56" width="2" height="2" fill="#eee"/><rect x="151" y="59" width="11" height="3" fill="#cfcbcb"/><rect x="174" y="61" width="11" height="5" fill="#b8b4b4"/><rect x="174" y="55" width="11" height="6" fill="#6e8e62"/><path d="M162 61H174M156 61V73" stroke="#1e2638" stroke-width="1.5"/><rect x="151" y="73" width="11" height="4" fill="#f8b260"/><rect x="195" y="73" width="11" height="4" fill="#b04878"/><rect x="151" y="90" width="11" height="3" fill="#cfcbcb"/></svg>
<div class="a" style="left:1932px;top:61px;width:4px;height:1295px;background:#323232"></div>
<div class="a" style="left:1933px;top:61px;width:1px;height:1295px;background:#111"></div>
<div class="a" style="left:1934px;top:61px;width:1px;height:1295px;background:#3a3a3a"></div>
<div class="a" style="left:1936px;top:61px;width:615px;height:28px;background:#262626"></div>
<svg class="a" style="left:1938px;top:63px;" width="16" height="16" viewBox="0 0 16 16"><rect x="0" y="0" width="8" height="10" fill="#b0b0b0"/><rect x="0" y="10" width="8" height="6" fill="#8a8a8a"/><rect x="8" y="0" width="8" height="16" fill="#5c5c5c"/></svg>
<div class="a" style="left:1958px;top:62px;width:110px;height:27px;background:#323232;border:1px solid #202020;border-bottom:none;border-radius:3px 3px 0 0"></div>
<div class="t" style="left:1973px;top:70.0px;font-size:12.6px;color:#f0a24a;">Properties</div>
<svg class="a" style="left:2041px;top:69px;" width="12" height="12" viewBox="0 0 12 12"><circle cx="6" cy="6" r="6" fill="#3a3a3a"/><path d="M3.5 3.5L8.5 8.5M8.5 3.5L3.5 8.5" stroke="#777" stroke-width="1.8"/></svg>
<div class="a" style="left:2069px;top:65px;width:171px;height:24px;background:#2a2a2a;border:1px solid #1e1e1e;border-bottom:none;border-radius:3px 3px 0 0"></div>
<div class="t" style="left:2085px;top:71.0px;font-size:12.6px;color:#d6dadd;">Background Renders</div>
<svg class="a" style="left:2215px;top:70px;" width="12" height="12" viewBox="0 0 12 12"><circle cx="6" cy="6" r="6" fill="#3a3a3a"/><path d="M3.5 3.5L8.5 8.5M8.5 3.5L3.5 8.5" stroke="#777" stroke-width="1.8"/></svg>
<div class="a" style="left:1936px;top:89px;width:598px;height:1267px;background:#323232"></div>
<div class="a" style="left:1940px;top:93px;width:22px;height:20px;background:#383838;border:1px solid #262626;border-radius:3px"></div>
<div class="t" style="left:1944px;top:98.0px;font-size:12.6px;color:#cdd3d8;">10</div>
<svg class="a" style="left:1967px;top:96px;" width="14" height="13" viewBox="0 0 14 13"><rect x="0" y="5" width="10" height="8" rx="1" fill="#000"/><path d="M7 5V3A3 3 0 0 1 13 3V5" stroke="#000" stroke-width="1.6" fill="none"/><rect x="4.5" y="8" width="1" height="3" fill="#555"/></svg>
<svg class="a" style="left:1986px;top:97px;" width="15" height="12" viewBox="0 0 15 12"><path d="M0 1H8M0 4H8M0 7H8M0 10H8" stroke="#c8c8c8" stroke-width="1.6"/><path d="M6 1L14 11M14 1L6 11" stroke="#e8e8e8" stroke-width="2.2"/></svg>
<div class="a" style="left:1940px;top:119px;width:592px;height:450px;border:2px solid #6ad26a"></div>
<div class="a" style="left:1942px;top:121px;width:588px;height:23px;background:linear-gradient(#3e3e3e,#343434)"></div>
<div class="a" style="left:1942px;top:144px;width:588px;height:1px;background:#1c1c1c"></div>
<svg class="a" style="left:1947px;top:128px;" width="9" height="7" viewBox="0 0 9 7"><path d="M0 0H9L4.5 7Z" fill="#000"/></svg>
<div class="a" style="left:1966px;top:123px;width:68px;height:20px;background:linear-gradient(#4a4a4a,#3e3e3e);border:1px solid #262626;border-radius:3px"></div>
<div class="a" style="left:1987px;top:124px;width:1px;height:18px;background:#262626"></div>
<div class="a" style="left:2010px;top:124px;width:1px;height:18px;background:#262626"></div>
<svg class="a" style="left:1966px;top:123px;" width="68" height="20" viewBox="0 0 68 20"><circle cx="10.5" cy="10" r="4" fill="none" stroke="#000" stroke-width="1.6"/><circle cx="10.5" cy="10" r="1.6" fill="#000"/><rect x="27" y="7" width="12" height="6" rx="1" fill="#000"/><path d="M30 7L27 3M36 7L39 3M33 13V15" stroke="#000" stroke-width="1"/><path d="M49 3Q47 8 51 10V17H55V10Q59 8 57 3V7L54 8L52 7Z" fill="#000"/></svg>
<div class="a" style="left:2045px;top:123px;width:291px;height:20px;background:#373737;border:1px solid #262626;border-radius:3px"></div>
<div class="t" style="left:2049px;top:128.0px;font-size:12.6px;color:#cdd3d8;">Roto1</div>
<div class="a" style="left:2347px;top:123px;width:114px;height:20px;background:linear-gradient(#474747,#3b3b3b);border:1px solid #262626;border-radius:3px"></div>
<div class="a" style="left:2369px;top:124px;width:1px;height:18px;background:#262626"></div>
<div class="a" style="left:2392px;top:124px;width:1px;height:18px;background:#262626"></div>
<div class="a" style="left:2415px;top:124px;width:1px;height:18px;background:#262626"></div>
<div class="a" style="left:2438px;top:124px;width:1px;height:18px;background:#262626"></div>
<svg class="a" style="left:2351px;top:127px;" width="12" height="11" viewBox="0 0 12 11"><rect x="0.5" y="0.5" width="11" height="10" fill="#6ed26e" stroke="#000"/><path d="M1 10L11 1" stroke="#222" stroke-width="1.3"/></svg>
<svg class="a" style="left:2374px;top:127px;" width="12" height="11" viewBox="0 0 12 11"><rect x="0.5" y="0.5" width="11" height="10" fill="#e0e0e0" stroke="#000"/><path d="M1 10L11 1" stroke="#333" stroke-width="1.3"/><path d="M1 10L11 1V10Z" fill="#f4f4f4"/></svg>
<svg class="a" style="left:2396px;top:127px;" width="64" height="12" viewBox="0 0 64 12"><path d="M3 10Q5 3 12 6" stroke="#444" stroke-width="2.4" fill="none"/><path d="M43 10Q41 3 34 6" stroke="#444" stroke-width="2.4" fill="none"/><path d="M51 11V3H60V9" stroke="#444" stroke-width="2.2" fill="none"/></svg>
<div class="t" style="left:2477px;top:127.0px;font-size:13px;color:#000;"><b>?</b></div>
<svg class="a" style="left:2498px;top:128px;" width="9" height="9" viewBox="0 0 9 9"><rect x="0.75" y="3.75" width="4.5" height="4.5" fill="none" stroke="#000" stroke-width="1.5"/><rect x="3.75" y="0.75" width="4.5" height="4.5" fill="none" stroke="#000" stroke-width="1.5"/></svg>
<svg class="a" style="left:2516px;top:129px;" width="9" height="8" viewBox="0 0 9 8"><path d="M0.5 0.5L8.5 7.5M8.5 0.5L0.5 7.5" stroke="#000" stroke-width="1.6"/></svg>
<div class="a" style="left:1942px;top:145px;width:588px;height:423px;background:#2e2e2e"></div>
<div class="a" style="left:1942px;top:147px;width:55px;height:21px;background:#323232;border:1px solid #202020;border-bottom:none;border-radius:3px 3px 0 0"></div>
<div class="t" style="left:1956px;top:152.0px;font-size:12.6px;color:#cdd3d8;">Roto</div>
<div class="a" style="left:1996px;top:150px;width:89px;height:17px;background:#262626;border:1px solid #1e1e1e;border-bottom:none;border-radius:3px 3px 0 0"></div>
<div class="t" style="left:2012px;top:152.0px;font-size:12.6px;color:#cdd3d8;">Transform</div>
<div class="a" style="left:2085px;top:150px;width:94px;height:17px;background:#262626;border:1px solid #1e1e1e;border-bottom:none;border-radius:3px 3px 0 0"></div>
<div class="t" style="left:2100px;top:152.0px;font-size:12.6px;color:#cdd3d8;">Motion Blur</div>
<div class="a" style="left:2179px;top:150px;width:66px;height:17px;background:#262626;border:1px solid #1e1e1e;border-bottom:none;border-radius:3px 3px 0 0"></div>
<div class="t" style="left:2194px;top:152.0px;font-size:12.6px;color:#cdd3d8;">Shape</div>
<div class="a" style="left:2245px;top:150px;width:63px;height:17px;background:#262626;border:1px solid #1e1e1e;border-bottom:none;border-radius:3px 3px 0 0"></div>
<div class="t" style="left:2260px;top:152.0px;font-size:12.6px;color:#cdd3d8;">Clone</div>
<div class="a" style="left:2308px;top:150px;width:75px;height:17px;background:#262626;border:1px solid #1e1e1e;border-bottom:none;border-radius:3px 3px 0 0"></div>
<div class="t" style="left:2323px;top:152.0px;font-size:12.6px;color:#cdd3d8;">Lifetime</div>
<div class="a" style="left:2383px;top:150px;width:78px;height:17px;background:#262626;border:1px solid #1e1e1e;border-bottom:none;border-radius:3px 3px 0 0"></div>
<div class="t" style="left:2398px;top:152.0px;font-size:12.6px;color:#cdd3d8;">Tracking</div>
<div class="a" style="left:2461px;top:150px;width:58px;height:17px;background:#262626;border:1px solid #1e1e1e;border-bottom:none;border-radius:3px 3px 0 0"></div>
<div class="t" style="left:2476px;top:152.0px;font-size:12.6px;color:#cdd3d8;">Node</div>
<div class="a" style="left:1942px;top:167px;width:587px;height:400px;background:#323232;border-radius:0 3px 0 0"></div>
<div class="t" style="left:1729px;width:300px;text-align:right;top:182.0px;font-size:12.6px;color:#d0d4d8;">output</div>
<div class="a" style="left:2035px;top:177px;width:185px;height:19px;background:linear-gradient(#484848,#3c3c3c);border:1px solid #232323;border-radius:3px"></div>
<div class="t" style="left:2040px;top:182.0px;font-size:12.6px;color:#cdd3d8;">alpha</div>
<svg class="a" style="left:2205.0px;top:183.5px;" width="8" height="5" viewBox="0 0 8 5"><path d="M0 0H8L4.0 5Z" fill="#d8d8d8"/></svg>
<div class="a" style="left:2227px;top:180px;width:14px;height:14px;background:#2c2c2c;border:1px solid #262626;border-radius:1px"></div>
<div class="a" style="left:2227px;top:180px;width:14px;height:14px;background:#d83030"></div>
<svg class="a" style="left:2227px;top:180px;" width="14" height="14" viewBox="0 0 14 14"><path d="M3 3L11 11M11 3L3 11" stroke="#fff" stroke-width="2.6"/></svg>
<div class="t" style="left:2248px;top:182.0px;font-size:12.6px;color:#d0d4d8;">alpha</div>
<div class="a" style="left:2291px;top:181px;width:14px;height:14px;background:#2c2c2c;border:1px solid #262626;border-radius:1px"></div>
<div class="a" style="left:2311px;top:177px;width:183px;height:19px;background:linear-gradient(#484848,#3c3c3c);border:1px solid #232323;border-radius:3px"></div>
<div class="t" style="left:2316px;top:182.0px;font-size:12.6px;color:#cdd3d8;">none</div>
<svg class="a" style="left:2479.0px;top:183.5px;" width="8" height="5" viewBox="0 0 8 5"><path d="M0 0H8L4.0 5Z" fill="#d8d8d8"/></svg>
<div class="a" style="left:2501px;top:180px;width:17px;height:15px;background:#3a3a3a;border:1px solid #262626;border-radius:3px"></div>
<div class="t" style="left:2505px;top:183.0px;font-size:12px;color:#d0d4d8;">=</div>
<div class="t" style="left:1729px;width:300px;text-align:right;top:204.0px;font-size:12.6px;color:#d0d4d8;">premultiply</div>
<div class="a" style="left:2035px;top:200px;width:217px;height:18px;background:linear-gradient(#484848,#3c3c3c);border:1px solid #232323;border-radius:3px"></div>
<div class="t" style="left:2040px;top:204.0px;font-size:12.6px;color:#cdd3d8;">none</div>
<svg class="a" style="left:2237.0px;top:206.0px;" width="8" height="5" viewBox="0 0 8 5"><path d="M0 0H8L4.0 5Z" fill="#d8d8d8"/></svg>
<div class="a" style="left:2259px;top:202px;width:14px;height:14px;background:#2c2c2c;border:1px solid #262626;border-radius:1px"></div>
<div class="a" style="left:2279px;top:200px;width:215px;height:18px;background:linear-gradient(#484848,#3c3c3c);border:1px solid #232323;border-radius:3px"></div>
<div class="t" style="left:2284px;top:204.0px;font-size:12.6px;color:#cdd3d8;">none</div>
<svg class="a" style="left:2479.0px;top:206.0px;" width="8" height="5" viewBox="0 0 8 5"><path d="M0 0H8L4.0 5Z" fill="#d8d8d8"/></svg>
<div class="a" style="left:2501px;top:202px;width:17px;height:15px;background:#3a3a3a;border:1px solid #262626;border-radius:3px"></div>
<div class="t" style="left:2505px;top:205.0px;font-size:12px;color:#d0d4d8;">=</div>
<div class="t" style="left:1729px;width:300px;text-align:right;top:226.0px;font-size:12.6px;color:#d0d4d8;">clip to</div>
<div class="a" style="left:2035px;top:222px;width:157px;height:18px;background:linear-gradient(#484848,#3c3c3c);border:1px solid #232323;border-radius:3px"></div>
<div class="t" style="left:2040px;top:226.0px;font-size:12.6px;color:#cdd3d8;">format</div>
<svg class="a" style="left:2177.0px;top:228.0px;" width="8" height="5" viewBox="0 0 8 5"><path d="M0 0H8L4.0 5Z" fill="#d8d8d8"/></svg>
<div class="a" style="left:2196px;top:224px;width:14px;height:14px;background:#2c2c2c;border:1px solid #262626;border-radius:1px"></div>
<div class="t" style="left:2217px;top:226.0px;font-size:12.6px;color:#d0d4d8;">replace</div>
<svg class="a" style="left:1955px;top:246px;" width="8" height="9" viewBox="0 0 8 9"><path d="M0 0L8 4.5L0 9Z" fill="#000"/></svg>
<div class="t" style="left:1729px;width:300px;text-align:right;top:268.0px;font-size:12.6px;color:#d0d4d8;">opacity</div>
<div class="a" style="left:2035px;top:264px;width:73px;height:19px;background:#363636;border:1px solid #232323;border-radius:3px"></div>
<div class="t" style="left:2040px;top:268.0px;font-size:12.6px;color:#cdd3d8;">1</div>
<div class="a" style="left:2112px;top:271px;width:384px;height:2px;background:#0e0e0e"></div>
<div class="a" style="left:2112px;top:274px;width:384px;height:1px;background:#141414"></div>
<svg class="a" style="left:2112px;top:263px;" width="386" height="8" viewBox="0 0 386 8"><rect x="0" y="0" width="1" height="7" fill="#555"/><rect x="13" y="3" width="1" height="4" fill="#555"/><rect x="22" y="3" width="1" height="4" fill="#555"/><rect x="30" y="0" width="1" height="7" fill="#555"/><rect x="38" y="3" width="1" height="4" fill="#555"/><rect x="52" y="3" width="1" height="4" fill="#555"/><rect x="63" y="0" width="1" height="7" fill="#555"/><rect x="72" y="3" width="1" height="4" fill="#555"/><rect x="86" y="3" width="1" height="4" fill="#555"/><rect x="100" y="0" width="1" height="7" fill="#555"/><rect x="111" y="3" width="1" height="4" fill="#555"/><rect x="121" y="3" width="1" height="4" fill="#555"/><rect x="140" y="0" width="1" height="7" fill="#555"/><rect x="156" y="3" width="1" height="4" fill="#555"/><rect x="172" y="3" width="1" height="4" fill="#555"/><rect x="210" y="0" width="1" height="7" fill="#555"/><rect x="243" y="3" width="1" height="4" fill="#555"/><rect x="272" y="3" width="1" height="4" fill="#555"/><rect x="298" y="0" width="1" height="7" fill="#555"/><rect x="322" y="3" width="1" height="4" fill="#555"/><rect x="344" y="3" width="1" height="4" fill="#555"/><rect x="365" y="0" width="1" height="7" fill="#555"/><rect x="382" y="3" width="1" height="4" fill="#555"/></svg>
<div class="t" style="left:2112px;top:274.0px;font-size:10.5px;color:#050505;letter-spacing:0.8px;-webkit-text-stroke:0.3px #050505">0</div>
<div class="t" style="left:2150px;top:274.0px;font-size:10.5px;color:#050505;letter-spacing:0.8px;-webkit-text-stroke:0.3px #050505">0.01</div>
<div class="t" style="left:2198px;top:274.0px;font-size:10.5px;color:#050505;letter-spacing:0.8px;-webkit-text-stroke:0.3px #050505">0.05</div>
<div class="t" style="left:2233px;top:274.0px;font-size:10.5px;color:#050505;letter-spacing:0.8px;-webkit-text-stroke:0.3px #050505">0.1</div>
<div class="t" style="left:2284px;top:274.0px;font-size:10.5px;color:#050505;letter-spacing:0.8px;-webkit-text-stroke:0.3px #050505">0.2</div>
<div class="t" style="left:2322px;top:274.0px;font-size:10.5px;color:#050505;letter-spacing:0.8px;-webkit-text-stroke:0.3px #050505">0.3</div>
<div class="t" style="left:2355px;top:274.0px;font-size:10.5px;color:#050505;letter-spacing:0.8px;-webkit-text-stroke:0.3px #050505">0.4</div>
<div class="t" style="left:2384px;top:274.0px;font-size:10.5px;color:#050505;letter-spacing:0.8px;-webkit-text-stroke:0.3px #050505">0.5</div>
<div class="t" style="left:2410px;top:274.0px;font-size:10.5px;color:#050505;letter-spacing:0.8px;-webkit-text-stroke:0.3px #050505">0.6</div>
<div class="t" style="left:2434px;top:274.0px;font-size:10.5px;color:#050505;letter-spacing:0.8px;-webkit-text-stroke:0.3px #050505">0.7</div>
<div class="t" style="left:2456px;top:274.0px;font-size:10.5px;color:#050505;letter-spacing:0.8px;-webkit-text-stroke:0.3px #050505">0.8</div>
<div class="t" style="left:2477px;top:274.0px;font-size:10.5px;color:#050505;letter-spacing:0.8px;-webkit-text-stroke:0.3px #050505">0.9</div>
<div class="t" style="left:2492px;top:274.0px;font-size:10.5px;color:#050505;letter-spacing:0.8px;-webkit-text-stroke:0.3px #050505">1</div>
<div class="a" style="left:2495px;top:266px;width:5px;height:9px;background:#7d6a35;border:1px solid #3b3118"></div>
<div class="a" style="left:2501px;top:264px;width:18px;height:19px;background:#3a3a3a;border:1px solid #262626;border-radius:3px"></div>
<svg class="a" style="left:2501px;top:264px;" width="18" height="19" viewBox="0 0 18 19"><path d="M3 15Q6 3 9.0 9.5T15 4" stroke="#222" stroke-width="1.6" fill="none"/></svg>
<div class="t" style="left:1729px;width:300px;text-align:right;top:290.0px;font-size:12.6px;color:#d0d4d8;">feather</div>
<div class="a" style="left:2035px;top:286px;width:73px;height:18px;background:#363636;border:1px solid #232323;border-radius:3px"></div>
<div class="t" style="left:2040px;top:290.0px;font-size:12.6px;color:#cdd3d8;">28</div>
<div class="a" style="left:2112px;top:293px;width:322px;height:2px;background:#0e0e0e"></div>
<div class="a" style="left:2112px;top:296px;width:322px;height:1px;background:#141414"></div>
<svg class="a" style="left:2112px;top:285px;" width="324" height="8" viewBox="0 0 324 8"><rect x="0" y="0" width="1" height="7" fill="#555"/><rect x="10" y="3" width="1" height="4" fill="#555"/><rect x="16" y="3" width="1" height="4" fill="#555"/><rect x="26" y="0" width="1" height="7" fill="#555"/><rect x="36" y="3" width="1" height="4" fill="#555"/><rect x="47" y="3" width="1" height="4" fill="#555"/><rect x="58" y="0" width="1" height="7" fill="#555"/><rect x="70" y="3" width="1" height="4" fill="#555"/><rect x="84" y="3" width="1" height="4" fill="#555"/><rect x="96" y="0" width="1" height="7" fill="#555"/><rect x="108" y="3" width="1" height="4" fill="#555"/><rect x="120" y="3" width="1" height="4" fill="#555"/><rect x="134" y="0" width="1" height="7" fill="#555"/><rect x="146" y="3" width="1" height="4" fill="#555"/><rect x="160" y="3" width="1" height="4" fill="#555"/><rect x="174" y="0" width="1" height="7" fill="#555"/><rect x="186" y="3" width="1" height="4" fill="#555"/><rect x="198" y="3" width="1" height="4" fill="#555"/><rect x="212" y="0" width="1" height="7" fill="#555"/><rect x="224" y="3" width="1" height="4" fill="#555"/><rect x="238" y="3" width="1" height="4" fill="#555"/><rect x="250" y="0" width="1" height="7" fill="#555"/><rect x="262" y="3" width="1" height="4" fill="#555"/><rect x="278" y="3" width="1" height="4" fill="#555"/><rect x="294" y="0" width="1" height="7" fill="#555"/><rect x="306" y="3" width="1" height="4" fill="#555"/><rect x="316" y="3" width="1" height="4" fill="#555"/><rect x="321" y="0" width="1" height="7" fill="#555"/></svg>
<div class="t" style="left:2112px;top:296.0px;font-size:10.5px;color:#050505;letter-spacing:0.8px;-webkit-text-stroke:0.3px #050505">-100</div>
<div class="t" style="left:2138px;top:296.0px;font-size:10.5px;color:#050505;letter-spacing:0.8px;-webkit-text-stroke:0.3px #050505">-70</div>
<div class="t" style="left:2170px;top:296.0px;font-size:10.5px;color:#050505;letter-spacing:0.8px;-webkit-text-stroke:0.3px #050505">-40</div>
<div class="t" style="left:2220px;top:296.0px;font-size:10.5px;color:#050505;letter-spacing:0.8px;-webkit-text-stroke:0.3px #050505">-10</div>
<div class="t" style="left:2272px;top:296.0px;font-size:10.5px;color:#050505;letter-spacing:0.8px;-webkit-text-stroke:0.3px #050505">0</div>
<div class="t" style="left:2324px;top:296.0px;font-size:10.5px;color:#050505;letter-spacing:0.8px;-webkit-text-stroke:0.3px #050505">10</div>
<div class="t" style="left:2374px;top:296.0px;font-size:10.5px;color:#050505;letter-spacing:0.8px;-webkit-text-stroke:0.3px #050505">40</div>
<div class="t" style="left:2406px;top:296.0px;font-size:10.5px;color:#050505;letter-spacing:0.8px;-webkit-text-stroke:0.3px #050505">70</div>
<div class="t" style="left:2415px;top:296.0px;font-size:10.5px;color:#050505;letter-spacing:0.8px;-webkit-text-stroke:0.3px #050505">1000</div>
<div class="a" style="left:2356px;top:288px;width:5px;height:9px;background:#7d6a35;border:1px solid #3b3118"></div>
<div class="a" style="left:2437px;top:286px;width:17px;height:19px;background:#3a3a3a;border:1px solid #262626;border-radius:3px 0 0 3px"></div>
<div class="t" style="left:2441px;top:290.0px;font-size:12.6px;color:#cdd3d8;">2</div>
<div class="a" style="left:2454px;top:286px;width:20px;height:19px;background:#3a3a3a;border:1px solid #262626;border-radius:3px"></div>
<svg class="a" style="left:2454px;top:286px;" width="20" height="19" viewBox="0 0 20 19"><path d="M3 15Q6 3 10.0 9.5T17 4" stroke="#222" stroke-width="1.6" fill="none"/></svg>
<div class="a" style="left:2478px;top:288px;width:14px;height:14px;background:#2c2c2c;border:1px solid #262626;border-radius:1px"></div>
<svg class="a" style="left:2478px;top:288px;" width="14" height="14" viewBox="0 0 14 14"><path d="M3 3L11 11M11 3L3 11" stroke="#e8e8e8" stroke-width="2.6"/></svg>
<div class="t" style="left:2499px;top:290.0px;font-size:12.6px;color:#d0d4d8;">on</div>
<div class="t" style="left:1729px;width:300px;text-align:right;top:312.0px;font-size:12.6px;color:#d0d4d8;">feather falloff</div>
<div class="a" style="left:2035px;top:308px;width:73px;height:18px;background:#363636;border:1px solid #232323;border-radius:3px"></div>
<div class="t" style="left:2040px;top:312.0px;font-size:12.6px;color:#cdd3d8;">1</div>
<div class="a" style="left:2112px;top:316px;width:306px;height:2px;background:#0e0e0e"></div>
<div class="a" style="left:2112px;top:319px;width:306px;height:1px;background:#141414"></div>
<svg class="a" style="left:2112px;top:308px;" width="308" height="8" viewBox="0 0 308 8"><rect x="0" y="0" width="1" height="7" fill="#555"/><rect x="38" y="3" width="1" height="4" fill="#555"/><rect x="65" y="3" width="1" height="4" fill="#555"/><rect x="86" y="0" width="1" height="7" fill="#555"/><rect x="103" y="3" width="1" height="4" fill="#555"/><rect x="118" y="3" width="1" height="4" fill="#555"/><rect x="136" y="0" width="1" height="7" fill="#555"/><rect x="153" y="3" width="1" height="4" fill="#555"/><rect x="188" y="3" width="1" height="4" fill="#555"/><rect x="218" y="0" width="1" height="7" fill="#555"/><rect x="238" y="3" width="1" height="4" fill="#555"/><rect x="256" y="3" width="1" height="4" fill="#555"/><rect x="271" y="0" width="1" height="7" fill="#555"/><rect x="283" y="3" width="1" height="4" fill="#555"/><rect x="293" y="3" width="1" height="4" fill="#555"/><rect x="300" y="0" width="1" height="7" fill="#555"/><rect x="305" y="3" width="1" height="4" fill="#555"/></svg>
<div class="t" style="left:2112px;top:319.0px;font-size:10.5px;color:#050505;letter-spacing:0.8px;-webkit-text-stroke:0.3px #050505">0.2</div>
<div class="t" style="left:2150px;top:319.0px;font-size:10.5px;color:#050505;letter-spacing:0.8px;-webkit-text-stroke:0.3px #050505">0.3</div>
<div class="t" style="left:2177px;top:319.0px;font-size:10.5px;color:#050505;letter-spacing:0.8px;-webkit-text-stroke:0.3px #050505">0.4</div>
<div class="t" style="left:2198px;top:319.0px;font-size:10.5px;color:#050505;letter-spacing:0.8px;-webkit-text-stroke:0.3px #050505">0.5</div>
<div class="t" style="left:2230px;top:319.0px;font-size:10.5px;color:#050505;letter-spacing:0.8px;-webkit-text-stroke:0.3px #050505">0.7</div>
<div class="t" style="left:2265px;top:319.0px;font-size:10.5px;color:#050505;letter-spacing:0.8px;-webkit-text-stroke:0.3px #050505">1</div>
<div class="t" style="left:2330px;top:319.0px;font-size:10.5px;color:#050505;letter-spacing:0.8px;-webkit-text-stroke:0.3px #050505">2</div>
<div class="t" style="left:2368px;top:319.0px;font-size:10.5px;color:#050505;letter-spacing:0.8px;-webkit-text-stroke:0.3px #050505">3</div>
<div class="t" style="left:2395px;top:319.0px;font-size:10.5px;color:#050505;letter-spacing:0.8px;-webkit-text-stroke:0.3px #050505">4</div>
<div class="t" style="left:2411px;top:319.0px;font-size:10.5px;color:#050505;letter-spacing:0.8px;-webkit-text-stroke:0.3px #050505">5</div>
<div class="a" style="left:2263px;top:311px;width:5px;height:9px;background:#7d6a35;border:1px solid #3b3118"></div>
<div class="a" style="left:2421px;top:308px;width:18px;height:19px;background:#3a3a3a;border:1px solid #262626;border-radius:3px"></div>
<svg class="a" style="left:2421px;top:308px;" width="18" height="19" viewBox="0 0 18 19"><path d="M3 15Q6 3 9.0 9.5T15 4" stroke="#222" stroke-width="1.6" fill="none"/></svg>
<div class="a" style="left:2442px;top:308px;width:76px;height:18px;background:linear-gradient(#484848,#3c3c3c);border:1px solid #232323;border-radius:3px"></div>
<div class="t" style="left:2447px;top:312.0px;font-size:12.6px;color:#cdd3d8;">linear</div>
<svg class="a" style="left:2503.0px;top:314.0px;" width="8" height="5" viewBox="0 0 8 5"><path d="M0 0H8L4.0 5Z" fill="#d8d8d8"/></svg>
<div class="t" style="left:1729px;width:300px;text-align:right;top:334.0px;font-size:12.6px;color:#d0d4d8;">spline key</div>
<div class="a" style="left:2035px;top:330px;width:39px;height:19px;background:#2f6fd8;border:1px solid #1a2a50;border-radius:3px"></div>
<div class="t" style="left:2040px;top:334.0px;font-size:12.6px;color:#e8eef8;">20</div>
<div class="t" style="left:2077px;top:334.0px;font-size:12.6px;color:#d0d4d8;">of</div>
<div class="a" style="left:2091px;top:330px;width:38px;height:19px;background:#363636;border:1px solid #232323;border-radius:3px"></div>
<div class="t" style="left:2095px;top:334.0px;font-size:12.6px;color:#cdd3d8;">20</div>
<div class="a" style="left:2133px;top:330px;width:21px;height:19px;background:linear-gradient(#484848,#3a3a3a);border:1px solid #262626;border-radius:3px"></div>
<svg class="a" style="left:2133px;top:330px;" width="21" height="19" viewBox="0 0 21 19"><circle cx="6" cy="5" r="2.2" fill="none" stroke="#aaa" stroke-width="1.5"/><path d="M6 7V15M4.5 15H7.5" stroke="#aaa" stroke-width="1.6"/><path d="M17 3V16L9 9.5Z" fill="#aaa"/></svg>
<div class="a" style="left:2157px;top:330px;width:21px;height:19px;background:linear-gradient(#484848,#3a3a3a);border:1px solid #262626;border-radius:3px"></div>
<svg class="a" style="left:2157px;top:330px;" width="21" height="19" viewBox="0 0 21 19"><path d="M3 3V16L11 9.5Z" fill="#aaa"/><circle cx="15" cy="5" r="2.2" fill="none" stroke="#aaa" stroke-width="1.5"/><path d="M15 7V15M13.5 15H16.5" stroke="#aaa" stroke-width="1.6"/></svg>
<div class="a" style="left:2181px;top:330px;width:21px;height:19px;background:linear-gradient(#484848,#3a3a3a);border:1px solid #262626;border-radius:3px"></div>
<svg class="a" style="left:2181px;top:330px;" width="21" height="19" viewBox="0 0 21 19"><circle cx="6" cy="5" r="2.2" fill="none" stroke="#aaa" stroke-width="1.5"/><path d="M6 7V15M4.5 15H7.5" stroke="#aaa" stroke-width="1.6"/><path d="M10 10H17M13.5 6.5V13.5" stroke="#aaa" stroke-width="1.8"/></svg>
<div class="a" style="left:2205px;top:330px;width:21px;height:19px;background:linear-gradient(#484848,#3a3a3a);border:1px solid #262626;border-radius:3px"></div>
<svg class="a" style="left:2205px;top:330px;" width="21" height="19" viewBox="0 0 21 19"><circle cx="6" cy="5" r="2.2" fill="none" stroke="#aaa" stroke-width="1.5"/><path d="M6 7V15M4.5 15H7.5" stroke="#aaa" stroke-width="1.6"/><path d="M10 10H17" stroke="#aaa" stroke-width="1.8"/></svg>
<div class="a" style="left:2389px;top:332px;width:14px;height:14px;background:#2c2c2c;border:1px solid #262626;border-radius:1px"></div>
<svg class="a" style="left:2389px;top:332px;" width="14" height="14" viewBox="0 0 14 14"><path d="M3 3L11 11M11 3L3 11" stroke="#e8e8e8" stroke-width="2.6"/></svg>
<div class="t" style="left:2410px;top:334.0px;font-size:12.6px;color:#d0d4d8;">visible</div>
<div class="a" style="left:2455px;top:332px;width:14px;height:14px;background:#2c2c2c;border:1px solid #262626;border-radius:1px"></div>
<div class="t" style="left:2476px;top:334.0px;font-size:12.6px;color:#d0d4d8;">locked</div>
<div class="a" style="left:1952px;top:387px;width:567px;height:148px;background:#393939;border:1px solid #1c1c1c"></div>
<div class="a" style="left:1953px;top:388px;width:565px;height:30px;background:#2e2e2e"></div>
<div class="t" style="left:1958px;top:398.0px;font-size:12.6px;color:#d0d4d8;">Name</div>
<div class="a" style="left:2262px;top:388px;width:1px;height:30px;background:#262626"></div>
<div class="a" style="left:2284px;top:388px;width:1px;height:30px;background:#262626"></div>
<div class="a" style="left:2306px;top:388px;width:1px;height:30px;background:#262626"></div>
<div class="a" style="left:2328px;top:388px;width:1px;height:30px;background:#262626"></div>
<div class="a" style="left:2350px;top:388px;width:1px;height:30px;background:#262626"></div>
<div class="a" style="left:2372px;top:388px;width:1px;height:30px;background:#262626"></div>
<div class="a" style="left:2394px;top:388px;width:1px;height:30px;background:#262626"></div>
<div class="a" style="left:2420px;top:388px;width:1px;height:30px;background:#262626"></div>
<div class="a" style="left:2464px;top:388px;width:1px;height:30px;background:#262626"></div>
<div class="t" style="left:2425px;top:398.0px;font-size:12.6px;color:#d0d4d8;">Life</div>
<div class="t" style="left:2469px;top:398.0px;font-size:12.6px;color:#d0d4d8;">Source</div>
<svg class="a" style="left:2266px;top:399px;" width="14" height="8" viewBox="0 0 14 8"><path d="M0.5 4Q7 -2 13.5 4Q7 10 0.5 4Z" fill="#b8b8b8"/><circle cx="7" cy="4" r="2" fill="#2e2e2e"/></svg>
<svg class="a" style="left:2289px;top:396px;" width="11" height="13" viewBox="0 0 11 13"><path d="M2.5 6V4A3 3 0 0 1 8.5 4V6" stroke="#b8b8b8" stroke-width="1.6" fill="none"/><rect x="0" y="6" width="11" height="7" fill="#b8b8b8"/><rect x="5" y="8" width="1.3" height="3" fill="#333"/></svg>
<svg class="a" style="left:2311px;top:398px;" width="11" height="11" viewBox="0 0 11 11"><rect x="0.5" y="0.5" width="10" height="10" fill="#d0d0d0" stroke="#111"/><path d="M1 10L10 1" stroke="#333" stroke-width="1.2"/></svg>
<svg class="a" style="left:2334px;top:396px;" width="12" height="12" viewBox="0 0 12 12"><defs><radialGradient id="cw" cx="50%" cy="50%"><stop offset="0" stop-color="#fff"/><stop offset="1" stop-color="#f0f" stop-opacity="0.2"/></radialGradient><linearGradient id="cw2" x1="0" x2="1"><stop offset="0" stop-color="#4cf"/><stop offset=".5" stop-color="#f8c"/><stop offset="1" stop-color="#cf4"/></linearGradient></defs><circle cx="6" cy="6" r="6" fill="url(#cw2)"/><circle cx="6" cy="6" r="6" fill="url(#cw)"/></svg>
<svg class="a" style="left:2355px;top:398px;" width="11" height="11" viewBox="0 0 11 11"><rect x="0.5" y="0.5" width="10" height="10" fill="#3c3c3c" stroke="#111"/><path d="M1 10L10 1V10Z" fill="#6a6a6a"/></svg>
<svg class="a" style="left:2378px;top:398px;" width="10" height="10" viewBox="0 0 10 10"><rect x="0" y="0" width="7" height="7" fill="#cfcfcf"/><rect x="3" y="3" width="7" height="7" fill="#cfcfcf"/><path d="M3 7H7V3" stroke="#333" stroke-width="0.8" fill="none"/></svg>
<svg class="a" style="left:2400px;top:399px;" width="17" height="9" viewBox="0 0 17 9"><path d="M0 9L5 0M3 9L8 0M6 9L11 0" stroke="#8a8a8a" stroke-width="1"/><path d="M10 9L14.5 0H17L12.5 9Z" fill="#e8e8e8"/></svg>
<div class="a" style="left:1953px;top:418px;width:565px;height:16px;background:#3c3c3c"></div>
<svg class="a" style="left:1961px;top:420px;" width="20" height="14" viewBox="0 0 20 14"><path d="M5 0V3" stroke="#111"/><rect x="0.5" y="3.5" width="9" height="8" fill="none" stroke="#111"/><path d="M2.5 7.5H7.5" stroke="#ccc"/><path d="M10 7.5H18" stroke="#111"/></svg>
<svg class="a" style="left:1981px;top:419px;" width="19" height="15" viewBox="0 0 19 15"><path d="M4 0H9L10 2H18V15H4Z" fill="#111"/><path d="M0 3H15L19 15H3Z" fill="#fff"/></svg>
<div class="t" style="left:2005px;top:421.0px;font-size:12.6px;color:#d0d4d8;">Root</div>
<svg class="a" style="left:2266px;top:423px;" width="14" height="8" viewBox="0 0 14 8"><path d="M0.5 4Q7 -2 13.5 4Q7 10 0.5 4Z" fill="#b8b8b8"/><circle cx="7" cy="4" r="2" fill="#2e2e2e"/></svg>
<svg class="a" style="left:2356px;top:421px;" width="11" height="11" viewBox="0 0 11 11"><rect x="0.5" y="0.5" width="10" height="10" fill="#3c3c3c" stroke="#111"/><path d="M1 10L10 1V10Z" fill="#6a6a6a"/></svg>
<svg class="a" style="left:2375px;top:421px;" width="10" height="10" viewBox="0 0 10 10"><rect x="0" y="0" width="7" height="7" fill="#cfcfcf"/><rect x="3" y="3" width="7" height="7" fill="#cfcfcf"/><path d="M3 7H7V3" stroke="#333" stroke-width="0.8" fill="none"/></svg>
<svg class="a" style="left:2399px;top:422px;" width="17" height="9" viewBox="0 0 17 9"><path d="M0 9L5 0M3 9L8 0M6 9L11 0" stroke="#8a8a8a" stroke-width="1"/><path d="M10 9L14.5 0H17L12.5 9Z" fill="#e8e8e8"/></svg>
<div class="a" style="left:1953px;top:434px;width:565px;height:20px;background:#f7931e"></div>
<svg class="a" style="left:1988px;top:434px;" width="18" height="12" viewBox="0 0 18 12"><path d="M2 0V9.5H17" stroke="#111" stroke-width="1.2" fill="none"/></svg>
<svg class="a" style="left:2006px;top:434px;" width="20" height="20" viewBox="0 0 20 20"><path d="M1 18L4 14L6 14L8 11L10 11L13 7L15 6L17 2L19 1L18 4L16 8L17 9L15 10L13 12L11 13L9 15L7 15L5 17L3 19Z" fill="#d2ab78" stroke="#8a6438" stroke-width="0.8"/><path d="M13 7L12 3L14 2" stroke="#8a6438" stroke-width="1.2" fill="none"/></svg>
<div class="t" style="left:2032px;top:439.0px;font-size:12.6px;color:#1a1a1a;">Bezier1</div>
<svg class="a" style="left:2266px;top:440px;" width="14" height="8" viewBox="0 0 14 8"><path d="M0.5 4Q7 -2 13.5 4Q7 10 0.5 4Z" fill="#e8b070"/></svg>
<svg class="a" style="left:2310px;top:437px;" width="13" height="13" viewBox="0 0 13 13"><rect x="0.75" y="0.75" width="11.5" height="11.5" fill="#fff" stroke="#111" stroke-width="1.5"/><path d="M1 12L12 1" stroke="#222" stroke-width="1.2"/></svg>
<svg class="a" style="left:2332px;top:437px;" width="13" height="13" viewBox="0 0 13 13"><rect x="0.75" y="0.75" width="11.5" height="11.5" fill="#bbb" stroke="#111" stroke-width="1.5"/><rect x="1.5" y="1.5" width="5" height="5" fill="#888"/><rect x="6.5" y="6.5" width="5" height="5" fill="#888"/></svg>
<svg class="a" style="left:2356px;top:439px;" width="11" height="11" viewBox="0 0 11 11"><rect x="0" y="0" width="11" height="11" fill="#7a4a10"/><path d="M1 10L10 1V10Z" fill="#f8c890"/></svg>
<svg class="a" style="left:2375px;top:439px;" width="11" height="11" viewBox="0 0 11 11"><rect x="0.5" y="0.5" width="7" height="7" fill="#e0c098" stroke="#a07040"/><rect x="3.5" y="3.5" width="7" height="7" fill="#e0c098" stroke="#a07040"/></svg>
<div class="a" style="left:2404px;top:440px;width:6px;height:11px;background:#e0b080;border:1px solid #b08050"></div>
<div class="t" style="left:2423px;top:439.0px;font-size:12.6px;color:#1a1a1a;">all</div>
<div class="t" style="left:2467px;top:439.0px;font-size:12.6px;color:#1a1a1a;">color</div>
<div class="a" style="left:1952px;top:537px;width:45px;height:19px;background:linear-gradient(#484848,#3a3a3a);border:1px solid #232323;border-radius:3px"></div>
<div class="a" style="left:1974px;top:538px;width:1px;height:17px;background:#262626"></div>
<svg class="a" style="left:1952px;top:537px;" width="45" height="19" viewBox="0 0 45 19"><path d="M6 9.5H15M10.5 5V14" stroke="#000" stroke-width="2"/><path d="M28 9.5H38" stroke="#000" stroke-width="2"/></svg>
<svg class="a" style="left:2521px;top:558px;" width="8" height="8" viewBox="0 0 8 8"><path d="M7 1L1 7M7 4L4 7" stroke="#666" stroke-width="1"/></svg>
<div class="a" style="left:2534px;top:89px;width:17px;height:1267px;background:#323232"></div>
<div class="a" style="left:2534px;top:118px;width:15px;height:15px;background:#383838;border:1px solid #242424;border-radius:3px"></div>
<svg class="a" style="left:2537px;top:122px;" width="9" height="6" viewBox="0 0 9 6"><path d="M0 6H9L4.5 0Z" fill="#ddd"/></svg>
<div class="a" style="left:2534px;top:134px;width:15px;height:1190px;background:#363636;border:1px solid #262626;border-radius:3px"></div>
<div class="a" style="left:2534px;top:1325px;width:15px;height:15px;background:#383838;border:1px solid #242424;border-radius:3px"></div>
<svg class="a" style="left:2537px;top:1329px;" width="9" height="6" viewBox="0 0 9 6"><path d="M0 6H9L4.5 0Z" fill="#ddd"/></svg>
<div class="a" style="left:2534px;top:1341px;width:15px;height:15px;background:#383838;border:1px solid #242424;border-radius:3px"></div>
<svg class="a" style="left:2537px;top:1345px;" width="9" height="6" viewBox="0 0 9 6"><path d="M0 0H9L4.5 6Z" fill="#ddd"/></svg>
<div class="a" style="left:9px;top:1356px;width:2542px;height:25px;background:#323232"></div>
<div class="t" style="left:1795px;width:700px;text-align:right;top:1361.0px;font-size:19.8px;color:#cfcfcf;">Memory: 1.8 GB (11.1%) CPU: 1.6% Disk: 0.0 MB/s Network: 0.0 MB/s</div>
<div class="a" style="left:2501px;top:1364px;width:25px;height:11px;background:#3cb83c;border-radius:2px"></div>
<div class="t" style="left:2501.0px;width:25px;text-align:center;top:1367.0px;font-size:8px;color:#1f6f1f;">OK</div>
<svg class="a" style="left:2530px;top:1368px;" width="18" height="12" viewBox="0 0 18 12"><path d="M17 2L5 12M17 6L9 12M17 10L13 12" stroke="#777" stroke-width="1"/></svg>
<div class="a" style="left:0px;top:1390px;width:2560px;height:50px;background:#05070b"></div>
<svg class="a" style="left:20px;top:1405px;" width="20" height="20" viewBox="0 0 20 20"><path d="M0 2.7L8 1.6V9.3H0ZM9 1.5L20 0V9.3H9ZM0 10.3H8V18.2L0 17.1ZM9 10.3H20V20L9 18.4Z" fill="#fff"/></svg>
<svg class="a" style="left:79px;top:1404px;" width="23" height="23" viewBox="0 0 23 23"><circle cx="15.5" cy="8" r="6.8" fill="none" stroke="#fff" stroke-width="1.4"/><path d="M10.7 12.8L1 22" stroke="#fff" stroke-width="1.5"/></svg>
<svg class="a" style="left:138px;top:1406px;" width="24" height="19" viewBox="0 0 24 19"><rect x="5" y="0.7" width="14" height="17.6" fill="none" stroke="#fff" stroke-width="1.4"/><path d="M3.5 3.5H0.7V15.5H3.5M20.5 3.5H23.3V15.5H20.5" stroke="#fff" stroke-width="1.4" fill="none"/></svg>
<svg class="a" style="left:200px;top:1403px;" width="28" height="23" viewBox="0 0 28 23"><path d="M0 1.5A1.5 1.5 0 0 1 1.5 0H10L12 2.5H26.5A1.5 1.5 0 0 1 28 4V22H0Z" fill="#f8d775"/><rect x="0" y="4" width="28" height="18" rx="1" fill="#fbe29a"/><path d="M5 23V12H23V23H19V16H9V23Z" fill="#34b4e8"/><rect x="3" y="1.5" width="6" height="1.6" fill="#fff"/></svg>
<div class="a" style="left:189px;top:1437px;width:51px;height:3px;background:#76b9ed"></div>
<svg class="a" style="left:262px;top:1401px;" width="28" height="27" viewBox="0 0 28 27"><rect x="12" y="3.5" width="15.5" height="20" fill="#fff" stroke="#2b579a" stroke-width="1.4"/><path d="M15 7H25M15 10H25M15 13H25M15 16H25M15 19H25" stroke="#2b579a" stroke-width="1.3"/><path d="M0 3L16 0V27L0 24Z" fill="#2b579a"/><text x="2" y="18.5" font-size="11" font-weight="bold" fill="#fff" font-family="Liberation Sans">W</text></svg>
<svg class="a" style="left:324px;top:1401px;" width="28" height="27" viewBox="0 0 28 27"><rect x="12" y="3.5" width="15.5" height="20" fill="#fff" stroke="#217346" stroke-width="1.4"/><path d="M15 7H25M15 10H25M15 13H25M15 16H25M15 19H25M19 5V22" stroke="#217346" stroke-width="1.3"/><path d="M0 3L16 0V27L0 24Z" fill="#217346"/><text x="3.5" y="18.5" font-size="11" font-weight="bold" fill="#fff" font-family="Liberation Sans">X</text></svg>
<svg class="a" style="left:385px;top:1400px;" width="28" height="28" viewBox="0 0 28 28"><circle cx="14" cy="14" r="14" fill="#db4437"/><path d="M14 14L2.1 7A14 14 0 0 0 14 28Z" fill="#0f9d58"/><path d="M14 14L14 28A14 14 0 0 0 25.9 7Z" fill="#ffcd40"/><path d="M14 7H25.9A14 14 0 0 0 2.1 7L7.9 17.5Z" fill="#db4437"/><circle cx="14" cy="14" r="6.2" fill="#fff"/><circle cx="14" cy="14" r="5" fill="#4285f4"/></svg>
<div class="a" style="left:375px;top:1437px;width:51px;height:3px;background:#76b9ed"></div>
<svg class="a" style="left:447px;top:1400px;" width="31" height="31" viewBox="0 0 31 31"><g transform="scale(1.0333333333333334)"><circle cx="15" cy="15" r="14" fill="#262626" stroke="#f7b52a" stroke-width="1.6"/><path d="M17.4 11.8L3.2 11.6A12.6 12.6 0 0 1 11 3.9Q13 7.5 15.2 8.4Z" fill="#f7b52a"/><path d="M17.4 11.8L18.2 8.4V3.5A12.6 12.6 0 0 1 25.8 11.3L21.7 12.8Z" fill="#f7b52a"/><path d="M19.5 14L25.4 19.9A12.6 12.6 0 0 1 17.4 26.6L16.9 16Z" fill="#f7b52a"/><circle cx="17.4" cy="12.2" r="3.8" fill="#f7b52a"/><circle cx="17.4" cy="11.9" r="1.5" fill="#262626"/><circle cx="24" cy="24" r="5.5" fill="#262626" stroke="#f7b52a" stroke-width="1.4"/><path d="M21.8 21.8L26.2 26.2M26.2 21.8L21.8 26.2" stroke="#f7b52a" stroke-width="1.2"/></g></svg>
<div class="a" style="left:437px;top:1437px;width:40px;height:3px;background:#76b9ed"></div>
<div class="a" style="left:477px;top:1437px;width:11px;height:3px;background:#5a8ab8"></div>
<div class="a" style="left:494px;top:1390px;width:61px;height:50px;background:#2b2d32"></div>
<svg class="a" style="left:509px;top:1400px;" width="31" height="31" viewBox="0 0 31 31"><g transform="scale(1.0333333333333334)"><circle cx="15" cy="15" r="14" fill="#262626" stroke="#f7b52a" stroke-width="1.6"/><path d="M17.4 11.8L3.2 11.6A12.6 12.6 0 0 1 11 3.9Q13 7.5 15.2 8.4Z" fill="#f7b52a"/><path d="M17.4 11.8L18.2 8.4V3.5A12.6 12.6 0 0 1 25.8 11.3L21.7 12.8Z" fill="#f7b52a"/><path d="M19.5 14L25.4 19.9A12.6 12.6 0 0 1 17.4 26.6L16.9 16Z" fill="#f7b52a"/><circle cx="17.4" cy="12.2" r="3.8" fill="#f7b52a"/><circle cx="17.4" cy="11.9" r="1.5" fill="#262626"/></g></svg>
<div class="a" style="left:494px;top:1437px;width:61px;height:3px;background:#76b9ed"></div>
<svg class="a" style="left:2062px;top:1405px;" width="20" height="19" viewBox="0 0 20 19"><circle cx="13" cy="5" r="3.6" fill="none" stroke="#fff" stroke-width="1.3"/><path d="M6 18A7 7 0 0 1 20 18" stroke="#fff" stroke-width="1.3" fill="none"/><circle cx="6" cy="9" r="2.8" fill="none" stroke="#fff" stroke-width="1.3"/><path d="M0.5 18.5A5.5 5.5 0 0 1 8 13" stroke="#fff" stroke-width="1.3" fill="none"/></svg>
<svg class="a" style="left:2107px;top:1405px;" width="21" height="21" viewBox="0 0 21 21"><circle cx="10.5" cy="10.5" r="10.5" fill="#2d9cdb"/><circle cx="6" cy="10.5" r="2.2" fill="#fff"/><circle cx="15" cy="6" r="2.2" fill="#fff"/><circle cx="15" cy="15" r="2.2" fill="#fff"/><path d="M6 10.5L15 6M6 10.5L15 15" stroke="#fff" stroke-width="1.4"/></svg>
<svg class="a" style="left:2139px;top:1405px;" width="17" height="19" viewBox="0 0 17 19"><path d="M0 19L8 0H12L4 19Z" fill="#0696d7"/><path d="M5 19L13 7L17 19Z" fill="#6ab04c"/><path d="M8 0H12L17 19H13Z" fill="#0696d7"/></svg>
<svg class="a" style="left:2166px;top:1408px;" width="22" height="14" viewBox="0 0 22 14"><path d="M4 14A4 4 0 0 1 4 6A6 6 0 0 1 15 4A5 5 0 0 1 18 14Z" fill="#8a8a8a"/></svg>
<svg class="a" style="left:2197px;top:1404px;" width="20" height="22" viewBox="0 0 20 22"><rect x="0" y="0" width="20" height="22" fill="#fff"/><rect x="1.5" y="1.5" width="17" height="19" fill="#1e6fd8"/><text x="3.5" y="18" font-size="16" fill="#fff" font-family="Liberation Sans">A</text></svg>
<svg class="a" style="left:2227px;top:1404px;" width="21" height="22" viewBox="0 0 21 22"><ellipse cx="9" cy="11" rx="7" ry="9" fill="none" stroke="#ccc" stroke-width="1.6" transform="rotate(-30 9 11)"/><circle cx="9" cy="11" r="3" fill="#888"/><path d="M12 14L19 21" stroke="#ccc" stroke-width="1.6"/></svg>
<svg class="a" style="left:2258px;top:1404px;" width="18" height="22" viewBox="0 0 18 22"><path d="M9 0L18 3V11Q18 18 9 22Q0 18 0 11V3Z" fill="#fff"/><path d="M9 0V22Q0 18 0 11V3Z" fill="#e8e8e8"/><path d="M0 11H18" stroke="#222" stroke-width="0.8"/><circle cx="14" cy="17" r="5" fill="#e03030"/><path d="M12 15L16 19M16 15L12 19" stroke="#fff" stroke-width="1.4"/></svg>
<svg class="a" style="left:2288px;top:1405px;" width="20" height="20" viewBox="0 0 20 20"><rect x="0" y="0" width="20" height="20" fill="#1b1b1b"/><path d="M2 12Q8 4 18 10Q10 8 6 12Q10 16 17 13Q9 19 2 12Z" fill="#76b900"/></svg>
<svg class="a" style="left:2318px;top:1403px;" width="17" height="24" viewBox="0 0 17 24"><ellipse cx="8.5" cy="12" rx="8.5" ry="12" fill="#0082fc"/><path d="M5 7L12 15L8.5 18V6L12 9L5 17" stroke="#fff" stroke-width="1.4" fill="none"/></svg>
<svg class="a" style="left:2348px;top:1405px;" width="16" height="20" viewBox="0 0 16 20"><path d="M2 2H14V14H8L2 18Z" fill="#8bd14a"/><rect x="6" y="6" width="4" height="4" fill="#1b1b1b"/></svg>
<svg class="a" style="left:2378px;top:1404px;" width="18" height="24" viewBox="0 0 18 24"><rect x="4" y="0" width="8" height="5" fill="none" stroke="#fff" stroke-width="1.2"/><rect x="2" y="5" width="12" height="17" fill="none" stroke="#fff" stroke-width="1.2"/><path d="M12 21L16 24" stroke="#fff" stroke-width="1.2"/></svg>
<svg class="a" style="left:2409px;top:1406px;" width="19" height="18" viewBox="0 0 19 18"><path d="M1 17A16 16 0 0 1 18 1M4.5 17A12.5 12.5 0 0 1 18 4.5M8 17A9 9 0 0 1 18 8M11.5 17A5.5 5.5 0 0 1 18 11.5" stroke="#fff" stroke-width="1.3" fill="none"/><circle cx="17" cy="17" r="1.4" fill="#fff"/></svg>
<svg class="a" style="left:2437px;top:1406px;" width="22" height="19" viewBox="0 0 22 19"><path d="M1 6H5L10 1.5V17.5L5 13H1Z" fill="none" stroke="#fff" stroke-width="1.3"/><path d="M13 6.5Q15 9.5 13 12.5M15.5 4Q19 9.5 15.5 15M18 1.5Q23 9.5 18 17.5" stroke="#fff" stroke-width="1.3" fill="none"/></svg>
<div class="t" style="left:2478.0px;width:60px;text-align:center;top:1398.0px;font-size:14.5px;color:#fff;">10:51</div>
<div class="t" style="left:2464.0px;width:90px;text-align:center;top:1421.0px;font-size:14.5px;color:#fff;">12/12/2018</div>
<div class="a" style="left:2555px;top:1390px;width:1px;height:50px;background:#333"></div>
</body></html>
